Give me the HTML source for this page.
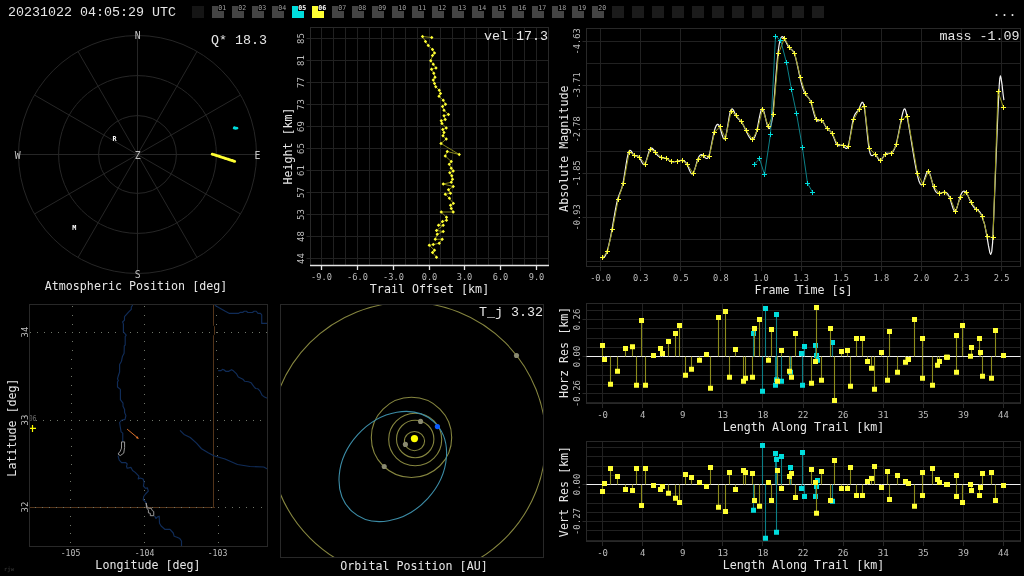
<!DOCTYPE html>
<html lang="en"><head><meta charset="utf-8"><title>Meteor event 20231022 04:05:29 UTC</title>
<style>
html,body{margin:0;padding:0;background:#000;overflow:hidden}
svg{display:block;will-change:transform}
text{white-space:pre}
</style></head>
<body>
<svg width="1024" height="576" viewBox="0 0 1024 576">
<text x="8" y="15.6" font-size="13.33" fill="#e6e6e6" text-anchor="start" font-family='"Liberation Mono", monospace' >20231022 04:05:29 UTC</text>
<text x="992.5" y="15.6" font-size="13.33" fill="#e6e6e6" text-anchor="start" font-family='"Liberation Mono", monospace' >...</text>
<rect x="192" y="6" width="12" height="12" fill="#151515"/>
<rect x="212" y="6" width="12" height="12" fill="#444444"/>
<rect x="218" y="4" width="8" height="7" fill="#000"/>
<text x="222.2" y="10" font-size="6.6" fill="#a0a0a0" text-anchor="middle" font-family='"DejaVu Sans Mono", "Liberation Mono", monospace' >01</text>
<rect x="232" y="6" width="12" height="12" fill="#444444"/>
<rect x="238" y="4" width="8" height="7" fill="#000"/>
<text x="242.2" y="10" font-size="6.6" fill="#a0a0a0" text-anchor="middle" font-family='"DejaVu Sans Mono", "Liberation Mono", monospace' >02</text>
<rect x="252" y="6" width="12" height="12" fill="#444444"/>
<rect x="258" y="4" width="8" height="7" fill="#000"/>
<text x="262.2" y="10" font-size="6.6" fill="#a0a0a0" text-anchor="middle" font-family='"DejaVu Sans Mono", "Liberation Mono", monospace' >03</text>
<rect x="272" y="6" width="12" height="12" fill="#444444"/>
<rect x="278" y="4" width="8" height="7" fill="#000"/>
<text x="282.2" y="10" font-size="6.6" fill="#a0a0a0" text-anchor="middle" font-family='"DejaVu Sans Mono", "Liberation Mono", monospace' >04</text>
<rect x="292" y="6" width="12" height="12" fill="#00dddd"/>
<rect x="298" y="4" width="8" height="7" fill="#000"/>
<text x="302.2" y="10" font-size="6.6" fill="#ffffff" text-anchor="middle" font-family='"DejaVu Sans Mono", "Liberation Mono", monospace' font-weight="bold">05</text>
<rect x="312" y="6" width="12" height="12" fill="#ffff33"/>
<rect x="318" y="4" width="8" height="7" fill="#000"/>
<text x="322.2" y="10" font-size="6.6" fill="#ffffff" text-anchor="middle" font-family='"DejaVu Sans Mono", "Liberation Mono", monospace' font-weight="bold">06</text>
<rect x="332" y="6" width="12" height="12" fill="#444444"/>
<rect x="338" y="4" width="8" height="7" fill="#000"/>
<text x="342.2" y="10" font-size="6.6" fill="#a0a0a0" text-anchor="middle" font-family='"DejaVu Sans Mono", "Liberation Mono", monospace' >07</text>
<rect x="352" y="6" width="12" height="12" fill="#444444"/>
<rect x="358" y="4" width="8" height="7" fill="#000"/>
<text x="362.2" y="10" font-size="6.6" fill="#a0a0a0" text-anchor="middle" font-family='"DejaVu Sans Mono", "Liberation Mono", monospace' >08</text>
<rect x="372" y="6" width="12" height="12" fill="#444444"/>
<rect x="378" y="4" width="8" height="7" fill="#000"/>
<text x="382.2" y="10" font-size="6.6" fill="#a0a0a0" text-anchor="middle" font-family='"DejaVu Sans Mono", "Liberation Mono", monospace' >09</text>
<rect x="392" y="6" width="12" height="12" fill="#444444"/>
<rect x="398" y="4" width="8" height="7" fill="#000"/>
<text x="402.2" y="10" font-size="6.6" fill="#a0a0a0" text-anchor="middle" font-family='"DejaVu Sans Mono", "Liberation Mono", monospace' >10</text>
<rect x="412" y="6" width="12" height="12" fill="#444444"/>
<rect x="418" y="4" width="8" height="7" fill="#000"/>
<text x="422.2" y="10" font-size="6.6" fill="#a0a0a0" text-anchor="middle" font-family='"DejaVu Sans Mono", "Liberation Mono", monospace' >11</text>
<rect x="432" y="6" width="12" height="12" fill="#444444"/>
<rect x="438" y="4" width="8" height="7" fill="#000"/>
<text x="442.2" y="10" font-size="6.6" fill="#a0a0a0" text-anchor="middle" font-family='"DejaVu Sans Mono", "Liberation Mono", monospace' >12</text>
<rect x="452" y="6" width="12" height="12" fill="#444444"/>
<rect x="458" y="4" width="8" height="7" fill="#000"/>
<text x="462.2" y="10" font-size="6.6" fill="#a0a0a0" text-anchor="middle" font-family='"DejaVu Sans Mono", "Liberation Mono", monospace' >13</text>
<rect x="472" y="6" width="12" height="12" fill="#444444"/>
<rect x="478" y="4" width="8" height="7" fill="#000"/>
<text x="482.2" y="10" font-size="6.6" fill="#a0a0a0" text-anchor="middle" font-family='"DejaVu Sans Mono", "Liberation Mono", monospace' >14</text>
<rect x="492" y="6" width="12" height="12" fill="#444444"/>
<rect x="498" y="4" width="8" height="7" fill="#000"/>
<text x="502.2" y="10" font-size="6.6" fill="#a0a0a0" text-anchor="middle" font-family='"DejaVu Sans Mono", "Liberation Mono", monospace' >15</text>
<rect x="512" y="6" width="12" height="12" fill="#444444"/>
<rect x="518" y="4" width="8" height="7" fill="#000"/>
<text x="522.2" y="10" font-size="6.6" fill="#a0a0a0" text-anchor="middle" font-family='"DejaVu Sans Mono", "Liberation Mono", monospace' >16</text>
<rect x="532" y="6" width="12" height="12" fill="#444444"/>
<rect x="538" y="4" width="8" height="7" fill="#000"/>
<text x="542.2" y="10" font-size="6.6" fill="#a0a0a0" text-anchor="middle" font-family='"DejaVu Sans Mono", "Liberation Mono", monospace' >17</text>
<rect x="552" y="6" width="12" height="12" fill="#444444"/>
<rect x="558" y="4" width="8" height="7" fill="#000"/>
<text x="562.2" y="10" font-size="6.6" fill="#a0a0a0" text-anchor="middle" font-family='"DejaVu Sans Mono", "Liberation Mono", monospace' >18</text>
<rect x="572" y="6" width="12" height="12" fill="#444444"/>
<rect x="578" y="4" width="8" height="7" fill="#000"/>
<text x="582.2" y="10" font-size="6.6" fill="#a0a0a0" text-anchor="middle" font-family='"DejaVu Sans Mono", "Liberation Mono", monospace' >19</text>
<rect x="592" y="6" width="12" height="12" fill="#444444"/>
<rect x="598" y="4" width="8" height="7" fill="#000"/>
<text x="602.2" y="10" font-size="6.6" fill="#a0a0a0" text-anchor="middle" font-family='"DejaVu Sans Mono", "Liberation Mono", monospace' >20</text>
<rect x="612" y="6" width="12" height="12" fill="#1b1b1b"/>
<rect x="632" y="6" width="12" height="12" fill="#1b1b1b"/>
<rect x="652" y="6" width="12" height="12" fill="#1b1b1b"/>
<rect x="672" y="6" width="12" height="12" fill="#1b1b1b"/>
<rect x="692" y="6" width="12" height="12" fill="#1b1b1b"/>
<rect x="712" y="6" width="12" height="12" fill="#1b1b1b"/>
<rect x="732" y="6" width="12" height="12" fill="#1b1b1b"/>
<rect x="752" y="6" width="12" height="12" fill="#1b1b1b"/>
<rect x="772" y="6" width="12" height="12" fill="#1b1b1b"/>
<rect x="792" y="6" width="12" height="12" fill="#1b1b1b"/>
<rect x="812" y="6" width="12" height="12" fill="#1b1b1b"/>
<circle cx="137.5" cy="154.5" r="38.9" fill="none" stroke="#262626" stroke-width="1"/>
<circle cx="137.5" cy="154.5" r="78.9" fill="none" stroke="#262626" stroke-width="1"/>
<circle cx="137.5" cy="154.5" r="119" fill="none" stroke="#262626" stroke-width="1"/>
<line x1="137.5" y1="154.5" x2="256.5" y2="154.5" stroke="#262626" stroke-width="1" />
<line x1="137.5" y1="154.5" x2="240.56" y2="214" stroke="#262626" stroke-width="1" />
<line x1="137.5" y1="154.5" x2="197" y2="257.56" stroke="#262626" stroke-width="1" />
<line x1="137.5" y1="154.5" x2="137.5" y2="273.5" stroke="#262626" stroke-width="1" />
<line x1="137.5" y1="154.5" x2="78" y2="257.56" stroke="#262626" stroke-width="1" />
<line x1="137.5" y1="154.5" x2="34.44" y2="214" stroke="#262626" stroke-width="1" />
<line x1="137.5" y1="154.5" x2="18.5" y2="154.5" stroke="#262626" stroke-width="1" />
<line x1="137.5" y1="154.5" x2="34.44" y2="95" stroke="#262626" stroke-width="1" />
<line x1="137.5" y1="154.5" x2="78" y2="51.44" stroke="#262626" stroke-width="1" />
<line x1="137.5" y1="154.5" x2="137.5" y2="35.5" stroke="#262626" stroke-width="1" />
<line x1="137.5" y1="154.5" x2="197" y2="51.44" stroke="#262626" stroke-width="1" />
<line x1="137.5" y1="154.5" x2="240.56" y2="95" stroke="#262626" stroke-width="1" />
<text x="137.75" y="39" font-size="9.8" fill="#c0c0c0" text-anchor="middle" font-family='"DejaVu Sans Mono", "Liberation Mono", monospace' >N</text>
<text x="137.75" y="278.3" font-size="9.8" fill="#c0c0c0" text-anchor="middle" font-family='"DejaVu Sans Mono", "Liberation Mono", monospace' >S</text>
<text x="17.75" y="159.1" font-size="9.8" fill="#c0c0c0" text-anchor="middle" font-family='"DejaVu Sans Mono", "Liberation Mono", monospace' >W</text>
<text x="257.4" y="159.1" font-size="9.8" fill="#c0c0c0" text-anchor="middle" font-family='"DejaVu Sans Mono", "Liberation Mono", monospace' >E</text>
<text x="137.75" y="159.1" font-size="9.8" fill="#c0c0c0" text-anchor="middle" font-family='"DejaVu Sans Mono", "Liberation Mono", monospace' >Z</text>
<circle cx="212.3" cy="154.2" r="1.45" fill="#ffff33"/>
<circle cx="213.61" cy="154.62" r="1.45" fill="#ffff33"/>
<circle cx="214.92" cy="155.05" r="1.45" fill="#ffff33"/>
<circle cx="216.24" cy="155.47" r="1.45" fill="#ffff33"/>
<circle cx="217.55" cy="155.89" r="1.45" fill="#ffff33"/>
<circle cx="218.86" cy="156.32" r="1.45" fill="#ffff33"/>
<circle cx="220.17" cy="156.74" r="1.45" fill="#ffff33"/>
<circle cx="221.48" cy="157.16" r="1.45" fill="#ffff33"/>
<circle cx="222.79" cy="157.59" r="1.45" fill="#ffff33"/>
<circle cx="224.11" cy="158.01" r="1.45" fill="#ffff33"/>
<circle cx="225.42" cy="158.44" r="1.45" fill="#ffff33"/>
<circle cx="226.73" cy="158.86" r="1.45" fill="#ffff33"/>
<circle cx="228.04" cy="159.28" r="1.45" fill="#ffff33"/>
<circle cx="229.35" cy="159.71" r="1.45" fill="#ffff33"/>
<circle cx="230.66" cy="160.13" r="1.45" fill="#ffff33"/>
<circle cx="231.98" cy="160.55" r="1.45" fill="#ffff33"/>
<circle cx="233.29" cy="160.98" r="1.45" fill="#ffff33"/>
<circle cx="234.6" cy="161.4" r="1.45" fill="#ffff33"/>
<ellipse cx="235.6" cy="128.2" rx="2.9" ry="1.45" fill="#00dddd"/>
<circle cx="234.4" cy="127.5" r="1.15" fill="#00dddd"/>
<text x="114.6" y="141" font-size="6.8" fill="#ffffff" text-anchor="middle" font-family='"DejaVu Sans Mono", "Liberation Mono", monospace' font-weight="bold">R</text>
<text x="74.3" y="230" font-size="6.8" fill="#ffffff" text-anchor="middle" font-family='"DejaVu Sans Mono", "Liberation Mono", monospace' font-weight="bold">M</text>
<text x="267" y="44.2" font-size="13.33" fill="#e6e6e6" text-anchor="end" font-family='"Liberation Mono", monospace' >Q* 18.3</text>
<text x="136" y="289.6" font-size="11.67" fill="#e6e6e6" text-anchor="middle" font-family='"DejaVu Sans Mono", "Liberation Mono", monospace' >Atmospheric Position [deg]</text>
<line x1="321.5" y1="27.5" x2="321.5" y2="265.5" stroke="#212121" stroke-width="1" />
<line x1="333.5" y1="27.5" x2="333.5" y2="265.5" stroke="#212121" stroke-width="1" />
<line x1="345.5" y1="27.5" x2="345.5" y2="265.5" stroke="#212121" stroke-width="1" />
<line x1="357.5" y1="27.5" x2="357.5" y2="265.5" stroke="#212121" stroke-width="1" />
<line x1="369.5" y1="27.5" x2="369.5" y2="265.5" stroke="#212121" stroke-width="1" />
<line x1="381.5" y1="27.5" x2="381.5" y2="265.5" stroke="#212121" stroke-width="1" />
<line x1="393.5" y1="27.5" x2="393.5" y2="265.5" stroke="#212121" stroke-width="1" />
<line x1="405.5" y1="27.5" x2="405.5" y2="265.5" stroke="#212121" stroke-width="1" />
<line x1="417.5" y1="27.5" x2="417.5" y2="265.5" stroke="#212121" stroke-width="1" />
<line x1="429.5" y1="27.5" x2="429.5" y2="265.5" stroke="#212121" stroke-width="1" />
<line x1="440.5" y1="27.5" x2="440.5" y2="265.5" stroke="#212121" stroke-width="1" />
<line x1="452.5" y1="27.5" x2="452.5" y2="265.5" stroke="#212121" stroke-width="1" />
<line x1="464.5" y1="27.5" x2="464.5" y2="265.5" stroke="#212121" stroke-width="1" />
<line x1="476.5" y1="27.5" x2="476.5" y2="265.5" stroke="#212121" stroke-width="1" />
<line x1="488.5" y1="27.5" x2="488.5" y2="265.5" stroke="#212121" stroke-width="1" />
<line x1="500.5" y1="27.5" x2="500.5" y2="265.5" stroke="#212121" stroke-width="1" />
<line x1="512.5" y1="27.5" x2="512.5" y2="265.5" stroke="#212121" stroke-width="1" />
<line x1="524.5" y1="27.5" x2="524.5" y2="265.5" stroke="#212121" stroke-width="1" />
<line x1="536.5" y1="27.5" x2="536.5" y2="265.5" stroke="#212121" stroke-width="1" />
<line x1="310.5" y1="38.5" x2="548.5" y2="38.5" stroke="#212121" stroke-width="1" />
<line x1="310.5" y1="60.5" x2="548.5" y2="60.5" stroke="#212121" stroke-width="1" />
<line x1="310.5" y1="82.5" x2="548.5" y2="82.5" stroke="#212121" stroke-width="1" />
<line x1="310.5" y1="104.5" x2="548.5" y2="104.5" stroke="#212121" stroke-width="1" />
<line x1="310.5" y1="126.5" x2="548.5" y2="126.5" stroke="#212121" stroke-width="1" />
<line x1="310.5" y1="148.5" x2="548.5" y2="148.5" stroke="#212121" stroke-width="1" />
<line x1="310.5" y1="170.5" x2="548.5" y2="170.5" stroke="#212121" stroke-width="1" />
<line x1="310.5" y1="192.5" x2="548.5" y2="192.5" stroke="#212121" stroke-width="1" />
<line x1="310.5" y1="214.5" x2="548.5" y2="214.5" stroke="#212121" stroke-width="1" />
<line x1="310.5" y1="236.5" x2="548.5" y2="236.5" stroke="#212121" stroke-width="1" />
<line x1="310.5" y1="258.5" x2="548.5" y2="258.5" stroke="#212121" stroke-width="1" />
<rect x="310.5" y="27.5" width="238" height="238" fill="none" stroke="#282828" stroke-width="1"/>
<line x1="321.5" y1="265.5" x2="321.5" y2="270" stroke="#e4e4e4" stroke-width="1.3" />
<text x="321.5" y="279.9" font-size="8.67" fill="#bcbcbc" text-anchor="middle" font-family='"DejaVu Sans Mono", "Liberation Mono", monospace' >-9.0</text>
<line x1="357.5" y1="265.5" x2="357.5" y2="270" stroke="#e4e4e4" stroke-width="1.3" />
<text x="357.5" y="279.9" font-size="8.67" fill="#bcbcbc" text-anchor="middle" font-family='"DejaVu Sans Mono", "Liberation Mono", monospace' >-6.0</text>
<line x1="393.5" y1="265.5" x2="393.5" y2="270" stroke="#e4e4e4" stroke-width="1.3" />
<text x="393.5" y="279.9" font-size="8.67" fill="#bcbcbc" text-anchor="middle" font-family='"DejaVu Sans Mono", "Liberation Mono", monospace' >-3.0</text>
<line x1="429.5" y1="265.5" x2="429.5" y2="270" stroke="#e4e4e4" stroke-width="1.3" />
<text x="429.5" y="279.9" font-size="8.67" fill="#bcbcbc" text-anchor="middle" font-family='"DejaVu Sans Mono", "Liberation Mono", monospace' >0.0</text>
<line x1="464.5" y1="265.5" x2="464.5" y2="270" stroke="#e4e4e4" stroke-width="1.3" />
<text x="464.5" y="279.9" font-size="8.67" fill="#bcbcbc" text-anchor="middle" font-family='"DejaVu Sans Mono", "Liberation Mono", monospace' >3.0</text>
<line x1="500.5" y1="265.5" x2="500.5" y2="270" stroke="#e4e4e4" stroke-width="1.3" />
<text x="500.5" y="279.9" font-size="8.67" fill="#bcbcbc" text-anchor="middle" font-family='"DejaVu Sans Mono", "Liberation Mono", monospace' >6.0</text>
<line x1="536.5" y1="265.5" x2="536.5" y2="270" stroke="#e4e4e4" stroke-width="1.3" />
<text x="536.5" y="279.9" font-size="8.67" fill="#bcbcbc" text-anchor="middle" font-family='"DejaVu Sans Mono", "Liberation Mono", monospace' >9.0</text>
<line x1="310" y1="265.5" x2="549" y2="265.5" stroke="#e4e4e4" stroke-width="1.4" />
<line x1="306.5" y1="38.5" x2="310.5" y2="38.5" stroke="#272727" stroke-width="1" />
<text x="303.7" y="38.5" font-size="9.0" fill="#bcbcbc" text-anchor="middle" font-family='"DejaVu Sans Mono", "Liberation Mono", monospace' transform="rotate(-90 303.7 38.5)" >85</text>
<line x1="306.5" y1="60.5" x2="310.5" y2="60.5" stroke="#272727" stroke-width="1" />
<text x="303.7" y="60.5" font-size="9.0" fill="#bcbcbc" text-anchor="middle" font-family='"DejaVu Sans Mono", "Liberation Mono", monospace' transform="rotate(-90 303.7 60.5)" >81</text>
<line x1="306.5" y1="82.5" x2="310.5" y2="82.5" stroke="#272727" stroke-width="1" />
<text x="303.7" y="82.5" font-size="9.0" fill="#bcbcbc" text-anchor="middle" font-family='"DejaVu Sans Mono", "Liberation Mono", monospace' transform="rotate(-90 303.7 82.5)" >77</text>
<line x1="306.5" y1="104.5" x2="310.5" y2="104.5" stroke="#272727" stroke-width="1" />
<text x="303.7" y="104.5" font-size="9.0" fill="#bcbcbc" text-anchor="middle" font-family='"DejaVu Sans Mono", "Liberation Mono", monospace' transform="rotate(-90 303.7 104.5)" >73</text>
<line x1="306.5" y1="126.5" x2="310.5" y2="126.5" stroke="#272727" stroke-width="1" />
<text x="303.7" y="126.5" font-size="9.0" fill="#bcbcbc" text-anchor="middle" font-family='"DejaVu Sans Mono", "Liberation Mono", monospace' transform="rotate(-90 303.7 126.5)" >69</text>
<line x1="306.5" y1="148.5" x2="310.5" y2="148.5" stroke="#272727" stroke-width="1" />
<text x="303.7" y="148.5" font-size="9.0" fill="#bcbcbc" text-anchor="middle" font-family='"DejaVu Sans Mono", "Liberation Mono", monospace' transform="rotate(-90 303.7 148.5)" >65</text>
<line x1="306.5" y1="170.5" x2="310.5" y2="170.5" stroke="#272727" stroke-width="1" />
<text x="303.7" y="170.5" font-size="9.0" fill="#bcbcbc" text-anchor="middle" font-family='"DejaVu Sans Mono", "Liberation Mono", monospace' transform="rotate(-90 303.7 170.5)" >61</text>
<line x1="306.5" y1="192.5" x2="310.5" y2="192.5" stroke="#272727" stroke-width="1" />
<text x="303.7" y="192.5" font-size="9.0" fill="#bcbcbc" text-anchor="middle" font-family='"DejaVu Sans Mono", "Liberation Mono", monospace' transform="rotate(-90 303.7 192.5)" >57</text>
<line x1="306.5" y1="214.5" x2="310.5" y2="214.5" stroke="#272727" stroke-width="1" />
<text x="303.7" y="214.5" font-size="9.0" fill="#bcbcbc" text-anchor="middle" font-family='"DejaVu Sans Mono", "Liberation Mono", monospace' transform="rotate(-90 303.7 214.5)" >53</text>
<line x1="306.5" y1="236.5" x2="310.5" y2="236.5" stroke="#272727" stroke-width="1" />
<text x="303.7" y="236.5" font-size="9.0" fill="#bcbcbc" text-anchor="middle" font-family='"DejaVu Sans Mono", "Liberation Mono", monospace' transform="rotate(-90 303.7 236.5)" >48</text>
<line x1="306.5" y1="258.5" x2="310.5" y2="258.5" stroke="#272727" stroke-width="1" />
<text x="303.7" y="258.5" font-size="9.0" fill="#bcbcbc" text-anchor="middle" font-family='"DejaVu Sans Mono", "Liberation Mono", monospace' transform="rotate(-90 303.7 258.5)" >44</text>
<text x="291.5" y="146" font-size="11.67" fill="#e6e6e6" text-anchor="middle" font-family='"DejaVu Sans Mono", "Liberation Mono", monospace' transform="rotate(-90 291.5 146)" >Height [km]</text>
<text x="429.5" y="293.1" font-size="11.67" fill="#e6e6e6" text-anchor="middle" font-family='"DejaVu Sans Mono", "Liberation Mono", monospace' >Trail Offset [km]</text>
<text x="548" y="40.3" font-size="13.33" fill="#e6e6e6" text-anchor="end" font-family='"Liberation Mono", monospace' >vel 17.3</text>
<polyline points="431.75,37.5 422.5,36.5 425.5,41.5 428.25,45.5 432.5,49.5 434.5,53 432.5,55.5 430.75,60.75 433.25,64.25 436,68 431.5,69.25 433.75,73.25 435,77.25 433.25,80 434.5,83.5 435.75,86.75 439.25,90.25 440.5,93.5 439,96.25 443.25,100.25 445.5,104.25 442.5,106.5 444,110.25 448.5,114.5 444,115.75 445.25,119.5 441.25,120.75 442,123.5 446.25,128 442.75,129.5 444,132.5 443,135.75 446.25,139 441,143.5 459.25,154.5 447.25,151.5 445.25,156 451.25,161.5 449.25,164.25 451.25,168.25 453.25,171 449.75,172.75 451.75,175.75 452.5,179.25 451.25,182.25 443.25,184 453.25,186.5 448.5,189.75 450.5,193.25 445.25,194.25 449.4,198.3 453.4,203.4 450.5,205.25 451.25,208.5 453.25,212 441.25,212 446.5,217.25 446.5,220.25 442.5,221.5 438.5,225.25 443.25,225.25 436.5,230.5 443.25,231.5 437.25,234.25 435.25,239.25 442.25,239.25 439.25,243.25 433.25,244.5 429.25,245.25 434.5,250.25 432.5,252.5 436.5,257.25" fill="none" stroke="#a3a321" stroke-width="0.8" stroke-linejoin="round" />
<path d="M430.05 37.5L431.75 35.8L433.45 37.5L431.75 39.2Z" fill="#ffff33"/>
<path d="M420.8 36.5L422.5 34.8L424.2 36.5L422.5 38.2Z" fill="#ffff33"/>
<path d="M423.8 41.5L425.5 39.8L427.2 41.5L425.5 43.2Z" fill="#ffff33"/>
<path d="M426.55 45.5L428.25 43.8L429.95 45.5L428.25 47.2Z" fill="#ffff33"/>
<path d="M430.8 49.5L432.5 47.8L434.2 49.5L432.5 51.2Z" fill="#ffff33"/>
<path d="M432.8 53L434.5 51.3L436.2 53L434.5 54.7Z" fill="#ffff33"/>
<path d="M430.8 55.5L432.5 53.8L434.2 55.5L432.5 57.2Z" fill="#ffff33"/>
<path d="M429.05 60.75L430.75 59.05L432.45 60.75L430.75 62.45Z" fill="#ffff33"/>
<path d="M431.55 64.25L433.25 62.55L434.95 64.25L433.25 65.95Z" fill="#ffff33"/>
<path d="M434.3 68L436 66.3L437.7 68L436 69.7Z" fill="#ffff33"/>
<path d="M429.8 69.25L431.5 67.55L433.2 69.25L431.5 70.95Z" fill="#ffff33"/>
<path d="M432.05 73.25L433.75 71.55L435.45 73.25L433.75 74.95Z" fill="#ffff33"/>
<path d="M433.3 77.25L435 75.55L436.7 77.25L435 78.95Z" fill="#ffff33"/>
<path d="M431.55 80L433.25 78.3L434.95 80L433.25 81.7Z" fill="#ffff33"/>
<path d="M432.8 83.5L434.5 81.8L436.2 83.5L434.5 85.2Z" fill="#ffff33"/>
<path d="M434.05 86.75L435.75 85.05L437.45 86.75L435.75 88.45Z" fill="#ffff33"/>
<path d="M437.55 90.25L439.25 88.55L440.95 90.25L439.25 91.95Z" fill="#ffff33"/>
<path d="M438.8 93.5L440.5 91.8L442.2 93.5L440.5 95.2Z" fill="#ffff33"/>
<path d="M437.3 96.25L439 94.55L440.7 96.25L439 97.95Z" fill="#ffff33"/>
<path d="M441.55 100.25L443.25 98.55L444.95 100.25L443.25 101.95Z" fill="#ffff33"/>
<path d="M443.8 104.25L445.5 102.55L447.2 104.25L445.5 105.95Z" fill="#ffff33"/>
<path d="M440.8 106.5L442.5 104.8L444.2 106.5L442.5 108.2Z" fill="#ffff33"/>
<path d="M442.3 110.25L444 108.55L445.7 110.25L444 111.95Z" fill="#ffff33"/>
<path d="M446.8 114.5L448.5 112.8L450.2 114.5L448.5 116.2Z" fill="#ffff33"/>
<path d="M442.3 115.75L444 114.05L445.7 115.75L444 117.45Z" fill="#ffff33"/>
<path d="M443.55 119.5L445.25 117.8L446.95 119.5L445.25 121.2Z" fill="#ffff33"/>
<path d="M439.55 120.75L441.25 119.05L442.95 120.75L441.25 122.45Z" fill="#ffff33"/>
<path d="M440.3 123.5L442 121.8L443.7 123.5L442 125.2Z" fill="#ffff33"/>
<path d="M444.55 128L446.25 126.3L447.95 128L446.25 129.7Z" fill="#ffff33"/>
<path d="M441.05 129.5L442.75 127.8L444.45 129.5L442.75 131.2Z" fill="#ffff33"/>
<path d="M442.3 132.5L444 130.8L445.7 132.5L444 134.2Z" fill="#ffff33"/>
<path d="M441.3 135.75L443 134.05L444.7 135.75L443 137.45Z" fill="#ffff33"/>
<path d="M444.55 139L446.25 137.3L447.95 139L446.25 140.7Z" fill="#ffff33"/>
<path d="M439.3 143.5L441 141.8L442.7 143.5L441 145.2Z" fill="#ffff33"/>
<path d="M457.55 154.5L459.25 152.8L460.95 154.5L459.25 156.2Z" fill="#ffff33"/>
<path d="M445.55 151.5L447.25 149.8L448.95 151.5L447.25 153.2Z" fill="#ffff33"/>
<path d="M443.55 156L445.25 154.3L446.95 156L445.25 157.7Z" fill="#ffff33"/>
<path d="M449.55 161.5L451.25 159.8L452.95 161.5L451.25 163.2Z" fill="#ffff33"/>
<path d="M447.55 164.25L449.25 162.55L450.95 164.25L449.25 165.95Z" fill="#ffff33"/>
<path d="M449.55 168.25L451.25 166.55L452.95 168.25L451.25 169.95Z" fill="#ffff33"/>
<path d="M451.55 171L453.25 169.3L454.95 171L453.25 172.7Z" fill="#ffff33"/>
<path d="M448.05 172.75L449.75 171.05L451.45 172.75L449.75 174.45Z" fill="#ffff33"/>
<path d="M450.05 175.75L451.75 174.05L453.45 175.75L451.75 177.45Z" fill="#ffff33"/>
<path d="M450.8 179.25L452.5 177.55L454.2 179.25L452.5 180.95Z" fill="#ffff33"/>
<path d="M449.55 182.25L451.25 180.55L452.95 182.25L451.25 183.95Z" fill="#ffff33"/>
<path d="M441.55 184L443.25 182.3L444.95 184L443.25 185.7Z" fill="#ffff33"/>
<path d="M451.55 186.5L453.25 184.8L454.95 186.5L453.25 188.2Z" fill="#ffff33"/>
<path d="M446.8 189.75L448.5 188.05L450.2 189.75L448.5 191.45Z" fill="#ffff33"/>
<path d="M448.8 193.25L450.5 191.55L452.2 193.25L450.5 194.95Z" fill="#ffff33"/>
<path d="M443.55 194.25L445.25 192.55L446.95 194.25L445.25 195.95Z" fill="#ffff33"/>
<path d="M447.7 198.3L449.4 196.6L451.1 198.3L449.4 200Z" fill="#ffff33"/>
<path d="M451.7 203.4L453.4 201.7L455.1 203.4L453.4 205.1Z" fill="#ffff33"/>
<path d="M448.8 205.25L450.5 203.55L452.2 205.25L450.5 206.95Z" fill="#ffff33"/>
<path d="M449.55 208.5L451.25 206.8L452.95 208.5L451.25 210.2Z" fill="#ffff33"/>
<path d="M451.55 212L453.25 210.3L454.95 212L453.25 213.7Z" fill="#ffff33"/>
<path d="M439.55 212L441.25 210.3L442.95 212L441.25 213.7Z" fill="#ffff33"/>
<path d="M444.8 217.25L446.5 215.55L448.2 217.25L446.5 218.95Z" fill="#ffff33"/>
<path d="M444.8 220.25L446.5 218.55L448.2 220.25L446.5 221.95Z" fill="#ffff33"/>
<path d="M440.8 221.5L442.5 219.8L444.2 221.5L442.5 223.2Z" fill="#ffff33"/>
<path d="M436.8 225.25L438.5 223.55L440.2 225.25L438.5 226.95Z" fill="#ffff33"/>
<path d="M441.55 225.25L443.25 223.55L444.95 225.25L443.25 226.95Z" fill="#ffff33"/>
<path d="M434.8 230.5L436.5 228.8L438.2 230.5L436.5 232.2Z" fill="#ffff33"/>
<path d="M441.55 231.5L443.25 229.8L444.95 231.5L443.25 233.2Z" fill="#ffff33"/>
<path d="M435.55 234.25L437.25 232.55L438.95 234.25L437.25 235.95Z" fill="#ffff33"/>
<path d="M433.55 239.25L435.25 237.55L436.95 239.25L435.25 240.95Z" fill="#ffff33"/>
<path d="M440.55 239.25L442.25 237.55L443.95 239.25L442.25 240.95Z" fill="#ffff33"/>
<path d="M437.55 243.25L439.25 241.55L440.95 243.25L439.25 244.95Z" fill="#ffff33"/>
<path d="M431.55 244.5L433.25 242.8L434.95 244.5L433.25 246.2Z" fill="#ffff33"/>
<path d="M427.55 245.25L429.25 243.55L430.95 245.25L429.25 246.95Z" fill="#ffff33"/>
<path d="M432.8 250.25L434.5 248.55L436.2 250.25L434.5 251.95Z" fill="#ffff33"/>
<path d="M430.8 252.5L432.5 250.8L434.2 252.5L432.5 254.2Z" fill="#ffff33"/>
<path d="M434.8 257.25L436.5 255.55L438.2 257.25L436.5 258.95Z" fill="#ffff33"/>
<line x1="600.5" y1="28.5" x2="600.5" y2="266.5" stroke="#212121" stroke-width="1" />
<line x1="640.5" y1="28.5" x2="640.5" y2="266.5" stroke="#212121" stroke-width="1" />
<line x1="680.5" y1="28.5" x2="680.5" y2="266.5" stroke="#212121" stroke-width="1" />
<line x1="720.5" y1="28.5" x2="720.5" y2="266.5" stroke="#212121" stroke-width="1" />
<line x1="761.5" y1="28.5" x2="761.5" y2="266.5" stroke="#212121" stroke-width="1" />
<line x1="801.5" y1="28.5" x2="801.5" y2="266.5" stroke="#212121" stroke-width="1" />
<line x1="841.5" y1="28.5" x2="841.5" y2="266.5" stroke="#212121" stroke-width="1" />
<line x1="881.5" y1="28.5" x2="881.5" y2="266.5" stroke="#212121" stroke-width="1" />
<line x1="921.5" y1="28.5" x2="921.5" y2="266.5" stroke="#212121" stroke-width="1" />
<line x1="961.5" y1="28.5" x2="961.5" y2="266.5" stroke="#212121" stroke-width="1" />
<line x1="1001.5" y1="28.5" x2="1001.5" y2="266.5" stroke="#212121" stroke-width="1" />
<line x1="586.5" y1="41.5" x2="1020.5" y2="41.5" stroke="#212121" stroke-width="1" />
<line x1="586.5" y1="63.5" x2="1020.5" y2="63.5" stroke="#212121" stroke-width="1" />
<line x1="586.5" y1="85.5" x2="1020.5" y2="85.5" stroke="#212121" stroke-width="1" />
<line x1="586.5" y1="107.5" x2="1020.5" y2="107.5" stroke="#212121" stroke-width="1" />
<line x1="586.5" y1="129.5" x2="1020.5" y2="129.5" stroke="#212121" stroke-width="1" />
<line x1="586.5" y1="151.5" x2="1020.5" y2="151.5" stroke="#212121" stroke-width="1" />
<line x1="586.5" y1="173.5" x2="1020.5" y2="173.5" stroke="#212121" stroke-width="1" />
<line x1="586.5" y1="195.5" x2="1020.5" y2="195.5" stroke="#212121" stroke-width="1" />
<line x1="586.5" y1="217.5" x2="1020.5" y2="217.5" stroke="#212121" stroke-width="1" />
<line x1="586.5" y1="239.5" x2="1020.5" y2="239.5" stroke="#212121" stroke-width="1" />
<line x1="586.5" y1="261.5" x2="1020.5" y2="261.5" stroke="#212121" stroke-width="1" />
<rect x="586.5" y="28.5" width="434" height="238" fill="none" stroke="#282828" stroke-width="1"/>
<line x1="600.5" y1="266.5" x2="600.5" y2="271" stroke="#272727" stroke-width="1" />
<text x="600.6" y="280.8" font-size="8.67" fill="#bcbcbc" text-anchor="middle" font-family='"DejaVu Sans Mono", "Liberation Mono", monospace' >-0.0</text>
<line x1="640.5" y1="266.5" x2="640.5" y2="271" stroke="#272727" stroke-width="1" />
<text x="640.7" y="280.8" font-size="8.67" fill="#bcbcbc" text-anchor="middle" font-family='"DejaVu Sans Mono", "Liberation Mono", monospace' >0.3</text>
<line x1="680.5" y1="266.5" x2="680.5" y2="271" stroke="#272727" stroke-width="1" />
<text x="680.8" y="280.8" font-size="8.67" fill="#bcbcbc" text-anchor="middle" font-family='"DejaVu Sans Mono", "Liberation Mono", monospace' >0.5</text>
<line x1="720.5" y1="266.5" x2="720.5" y2="271" stroke="#272727" stroke-width="1" />
<text x="720.9" y="280.8" font-size="8.67" fill="#bcbcbc" text-anchor="middle" font-family='"DejaVu Sans Mono", "Liberation Mono", monospace' >0.8</text>
<line x1="761.5" y1="266.5" x2="761.5" y2="271" stroke="#272727" stroke-width="1" />
<text x="761" y="280.8" font-size="8.67" fill="#bcbcbc" text-anchor="middle" font-family='"DejaVu Sans Mono", "Liberation Mono", monospace' >1.0</text>
<line x1="801.5" y1="266.5" x2="801.5" y2="271" stroke="#272727" stroke-width="1" />
<text x="801.1" y="280.8" font-size="8.67" fill="#bcbcbc" text-anchor="middle" font-family='"DejaVu Sans Mono", "Liberation Mono", monospace' >1.3</text>
<line x1="841.5" y1="266.5" x2="841.5" y2="271" stroke="#272727" stroke-width="1" />
<text x="841.2" y="280.8" font-size="8.67" fill="#bcbcbc" text-anchor="middle" font-family='"DejaVu Sans Mono", "Liberation Mono", monospace' >1.5</text>
<line x1="881.5" y1="266.5" x2="881.5" y2="271" stroke="#272727" stroke-width="1" />
<text x="881.3" y="280.8" font-size="8.67" fill="#bcbcbc" text-anchor="middle" font-family='"DejaVu Sans Mono", "Liberation Mono", monospace' >1.8</text>
<line x1="921.5" y1="266.5" x2="921.5" y2="271" stroke="#272727" stroke-width="1" />
<text x="921.4" y="280.8" font-size="8.67" fill="#bcbcbc" text-anchor="middle" font-family='"DejaVu Sans Mono", "Liberation Mono", monospace' >2.0</text>
<line x1="961.5" y1="266.5" x2="961.5" y2="271" stroke="#272727" stroke-width="1" />
<text x="961.5" y="280.8" font-size="8.67" fill="#bcbcbc" text-anchor="middle" font-family='"DejaVu Sans Mono", "Liberation Mono", monospace' >2.3</text>
<line x1="1001.5" y1="266.5" x2="1001.5" y2="271" stroke="#272727" stroke-width="1" />
<text x="1001.6" y="280.8" font-size="8.67" fill="#bcbcbc" text-anchor="middle" font-family='"DejaVu Sans Mono", "Liberation Mono", monospace' >2.5</text>
<line x1="582.5" y1="41.5" x2="586.5" y2="41.5" stroke="#272727" stroke-width="1" />
<text x="580" y="41.4" font-size="8.67" fill="#bcbcbc" text-anchor="middle" font-family='"DejaVu Sans Mono", "Liberation Mono", monospace' transform="rotate(-90 580 41.4)" >-4.63</text>
<line x1="582.5" y1="85.5" x2="586.5" y2="85.5" stroke="#272727" stroke-width="1" />
<text x="580" y="85.4" font-size="8.67" fill="#bcbcbc" text-anchor="middle" font-family='"DejaVu Sans Mono", "Liberation Mono", monospace' transform="rotate(-90 580 85.4)" >-3.71</text>
<line x1="582.5" y1="129.5" x2="586.5" y2="129.5" stroke="#272727" stroke-width="1" />
<text x="580" y="129.4" font-size="8.67" fill="#bcbcbc" text-anchor="middle" font-family='"DejaVu Sans Mono", "Liberation Mono", monospace' transform="rotate(-90 580 129.4)" >-2.78</text>
<line x1="582.5" y1="173.5" x2="586.5" y2="173.5" stroke="#272727" stroke-width="1" />
<text x="580" y="173.4" font-size="8.67" fill="#bcbcbc" text-anchor="middle" font-family='"DejaVu Sans Mono", "Liberation Mono", monospace' transform="rotate(-90 580 173.4)" >-1.85</text>
<line x1="582.5" y1="217.5" x2="586.5" y2="217.5" stroke="#272727" stroke-width="1" />
<text x="580" y="217.4" font-size="8.67" fill="#bcbcbc" text-anchor="middle" font-family='"DejaVu Sans Mono", "Liberation Mono", monospace' transform="rotate(-90 580 217.4)" >-0.93</text>
<text x="567.8" y="148.7" font-size="11.67" fill="#e6e6e6" text-anchor="middle" font-family='"DejaVu Sans Mono", "Liberation Mono", monospace' transform="rotate(-90 567.8 148.7)" >Absolute Magnitude</text>
<text x="803.5" y="294" font-size="11.67" fill="#e6e6e6" text-anchor="middle" font-family='"DejaVu Sans Mono", "Liberation Mono", monospace' >Frame Time [s]</text>
<text x="1019.6" y="40.3" font-size="13.33" fill="#e6e6e6" text-anchor="end" font-family='"Liberation Mono", monospace' >mass -1.09</text>
<polyline points="602.5,257.5 603,257.81 603.5,257.9 604,257.77 604.5,257.44 605,256.91 605.5,256.19 606,255.28 606.5,254.19 607,252.93 607.5,251.5 608,249.91 608.5,248.17 609,246.28 609.5,244.25 610,242.09 610.5,239.8 611,237.39 611.5,234.86 612,232.23 612.5,229.5 613,226.68 613.5,223.8 614,220.88 614.5,217.97 615,215.08 615.5,212.26 616,209.53 616.5,206.93 617,204.48 617.5,202.22 618,200.18 618.5,198.38 619,196.82 619.5,195.43 620,194.16 620.5,192.93 621,191.7 621.5,190.39 622,188.96 622.5,187.33 623,185.45 623.5,183.25 624,180.7 624.5,177.86 625,174.81 625.5,171.63 626,168.41 626.5,165.22 627,162.15 627.5,159.28 628,156.69 628.5,154.47 629,152.69 629.5,151.45 630,150.72 630.5,150.46 631,150.57 631.5,150.97 632,151.59 632.5,152.36 633,153.18 633.5,153.99 634,154.7 634.5,155.25 635,155.6 635.5,155.8 636,155.9 636.5,155.93 637,155.93 637.5,155.95 638,156.02 638.5,156.2 639,156.51 639.5,157 640,157.7 640.5,158.56 641,159.54 641.5,160.56 642,161.59 642.5,162.55 643,163.4 643.5,164.07 644,164.51 644.5,164.67 645,164.49 645.5,163.91 646,162.94 646.5,161.66 647,160.14 647.5,158.47 648,156.7 648.5,154.93 649,153.22 649.5,151.65 650,150.3 650.5,149.25 651,148.55 651.5,148.17 652,148.08 652.5,148.24 653,148.61 653.5,149.14 654,149.8 654.5,150.54 655,151.33 655.5,152.12 656,152.87 656.5,153.57 657,154.2 657.5,154.79 658,155.32 658.5,155.79 659,156.22 659.5,156.59 660,156.91 660.5,157.18 661,157.41 661.5,157.58 662,157.72 662.5,157.82 663,157.9 663.5,157.96 664,158.02 664.5,158.09 665,158.17 665.5,158.27 666,158.41 666.5,158.6 667,158.82 667.5,159.09 668,159.38 668.5,159.68 669,160 669.5,160.31 670,160.62 670.5,160.91 671,161.17 671.5,161.4 672,161.59 672.5,161.73 673,161.82 673.5,161.88 674,161.9 674.5,161.89 675,161.85 675.5,161.79 676,161.71 676.5,161.61 677,161.5 677.5,161.38 678,161.25 678.5,161.12 679,161 679.5,160.88 680,160.77 680.5,160.67 681,160.59 681.5,160.54 682,160.5 682.5,160.5 683,160.54 683.5,160.63 684,160.77 684.5,160.99 685,161.3 685.5,161.7 686,162.2 686.5,162.83 687,163.59 687.5,164.5 688,165.55 688.5,166.71 689,167.92 689.5,169.15 690,170.34 690.5,171.44 691,172.4 691.5,173.18 692,173.73 692.5,173.99 693,173.92 693.5,173.48 694,172.67 694.5,171.54 695,170.17 695.5,168.61 696,166.93 696.5,165.19 697,163.44 697.5,161.77 698,160.21 698.5,158.84 699,157.69 699.5,156.73 700,155.98 700.5,155.41 701,155.02 701.5,154.8 702,154.75 702.5,154.84 703,155.08 703.5,155.45 704,155.93 704.5,156.48 705,157.04 705.5,157.57 706,158.04 706.5,158.39 707,158.58 707.5,158.56 708,158.3 708.5,157.74 709,156.84 709.5,155.56 710,153.91 710.5,151.94 711,149.73 711.5,147.33 712,144.8 712.5,142.22 713,139.63 713.5,137.11 714,134.71 714.5,132.5 715,130.53 715.5,128.83 716,127.39 716.5,126.22 717,125.35 717.5,124.76 718,124.47 718.5,124.5 719,124.84 719.5,125.5 720,126.5 720.5,127.82 721,129.39 721.5,131.11 722,132.87 722.5,134.59 723,136.17 723.5,137.5 724,138.5 724.5,139.07 725,139.1 725.5,138.5 726,137.21 726.5,135.32 727,132.95 727.5,130.22 728,127.25 728.5,124.16 729,121.08 729.5,118.13 730,115.42 730.5,113.09 731,111.25 731.5,109.99 732,109.28 732.5,109.04 733,109.21 733.5,109.7 734,110.47 734.5,111.42 735,112.49 735.5,113.62 736,114.73 736.5,115.75 737,116.63 737.5,117.37 738,118 738.5,118.55 739,119.04 739.5,119.5 740,119.95 740.5,120.41 741,120.92 741.5,121.5 742,122.16 742.5,122.91 743,123.73 743.5,124.62 744,125.56 744.5,126.55 745,127.57 745.5,128.62 746,129.68 746.5,130.75 747,131.82 747.5,132.87 748,133.89 748.5,134.87 749,135.79 749.5,136.64 750,137.4 750.5,138.07 751,138.63 751.5,139.06 752,139.36 752.5,139.5 753,139.48 753.5,139.28 754,138.89 754.5,138.29 755,137.48 755.5,136.44 756,135.16 756.5,133.63 757,131.83 757.5,129.75 758,127.4 758.5,124.85 759,122.2 759.5,119.55 760,117 760.5,114.63 761,112.55 761.5,110.86 762,109.64 762.5,109 763,109 763.5,109.58 764,110.65 764.5,112.12 765,113.89 765.5,115.88 766,117.98 766.5,120.12 767,122.19 767.5,124.11 768,125.78 768.5,127.12 769,128.05 769.5,128.55 770,128.56 770.5,128.05 771,126.98 771.5,125.32 772,123.03 772.5,120.05 773,116.37 773.5,111.94 774,106.82 774.5,101.14 775,95.05 775.5,88.71 776,82.24 776.5,75.81 777,69.54 777.5,63.6 778,58.12 778.5,53.25 779,49.1 779.5,45.65 780,42.86 780.5,40.65 781,39 781.5,37.83 782,37.11 782.5,36.77 783,36.77 783.5,37.05 784,37.56 784.5,38.25 785,39.07 785.5,39.98 786,40.97 786.5,42 787,43.04 787.5,44.07 788,45.06 788.5,45.98 789,46.8 789.5,47.5 790,48.06 790.5,48.51 791,48.89 791.5,49.23 792,49.59 792.5,49.99 793,50.49 793.5,51.11 794,51.9 794.5,52.91 795,54.16 795.5,55.66 796,57.39 796.5,59.3 797,61.37 797.5,63.56 798,65.85 798.5,68.19 799,70.56 799.5,72.92 800,75.25 800.5,77.5 801,79.65 801.5,81.7 802,83.63 802.5,85.44 803,87.13 803.5,88.68 804,90.1 804.5,91.38 805,92.52 805.5,93.5 806,94.33 806.5,95.04 807,95.67 807.5,96.23 808,96.77 808.5,97.33 809,97.93 809.5,98.6 810,99.39 810.5,100.32 811,101.43 811.5,102.75 812,104.3 812.5,106.03 813,107.9 813.5,109.83 814,111.76 814.5,113.65 815,115.42 815.5,117.03 816,118.41 816.5,119.5 817,120.26 817.5,120.73 818,120.96 818.5,121 819,120.9 819.5,120.71 820,120.5 820.5,120.3 821,120.18 821.5,120.18 822,120.36 822.5,120.73 823,121.26 823.5,121.92 824,122.69 824.5,123.53 825,124.41 825.5,125.31 826,126.2 826.5,127.05 827,127.82 827.5,128.5 828,129.06 828.5,129.52 829,129.92 829.5,130.28 830,130.64 830.5,131.03 831,131.48 831.5,132.02 832,132.68 832.5,133.5 833,134.49 833.5,135.63 834,136.86 834.5,138.16 835,139.46 835.5,140.75 836,141.96 836.5,143.06 837,144 837.5,144.75 838,145.27 838.5,145.59 839,145.73 839.5,145.75 840,145.67 840.5,145.53 841,145.37 841.5,145.23 842,145.13 842.5,145.12 843,145.23 843.5,145.5 844,145.95 844.5,146.51 845,147.13 845.5,147.71 846,148.2 846.5,148.51 847,148.56 847.5,148.3 848,147.64 848.5,146.5 849,144.85 849.5,142.74 850,140.27 850.5,137.53 851,134.61 851.5,131.61 852,128.61 852.5,125.71 853,123 853.5,120.58 854,118.52 854.5,116.86 855,115.53 855.5,114.47 856,113.64 856.5,112.96 857,112.38 857.5,111.85 858,111.3 858.5,110.69 859,109.94 859.5,109 860,107.85 860.5,106.57 861,105.28 861.5,104.1 862,103.15 862.5,102.55 863,102.41 863.5,102.86 864,104.02 864.5,106 865,108.87 865.5,112.51 866,116.75 866.5,121.4 867,126.29 867.5,131.25 868,136.1 868.5,140.66 869,144.77 869.5,148.25 870,150.96 870.5,152.96 871,154.34 871.5,155.2 872,155.63 872.5,155.72 873,155.57 873.5,155.28 874,154.94 874.5,154.65 875,154.49 875.5,154.57 876,154.9 876.5,155.44 877,156.12 877.5,156.89 878,157.71 878.5,158.51 879,159.24 879.5,159.85 880,160.29 880.5,160.5 881,160.44 881.5,160.15 882,159.66 882.5,159.02 883,158.27 883.5,157.46 884,156.64 884.5,155.84 885,155.11 885.5,154.5 886,154.04 886.5,153.71 887,153.5 887.5,153.39 888,153.35 888.5,153.35 889,153.39 889.5,153.44 890,153.47 890.5,153.46 891,153.39 891.5,153.25 892,153.01 892.5,152.65 893,152.17 893.5,151.56 894,150.8 894.5,149.89 895,148.81 895.5,147.57 896,146.13 896.5,144.5 897,142.67 897.5,140.66 898,138.49 898.5,136.19 899,133.78 899.5,131.29 900,128.75 900.5,126.17 901,123.59 901.5,121.02 902,118.5 902.5,116.08 903,113.86 903.5,111.94 904,110.42 904.5,109.39 905,108.95 905.5,109.2 906,110.19 906.5,111.8 907,113.88 907.5,116.25 908,118.79 908.5,121.45 909,124.22 909.5,127.08 910,130.02 910.5,133.03 911,136.09 911.5,139.18 912,142.29 912.5,145.4 913,148.5 913.5,151.58 914,154.62 914.5,157.6 915,160.51 915.5,163.34 916,166.07 916.5,168.68 917,171.16 917.5,173.5 918,175.68 918.5,177.67 919,179.47 919.5,181.05 920,182.39 920.5,183.46 921,184.26 921.5,184.76 922,184.94 922.5,184.77 923,184.25 923.5,183.36 924,182.18 924.5,180.77 925,179.22 925.5,177.62 926,176.04 926.5,174.55 927,173.25 927.5,172.22 928,171.52 928.5,171.25 929,171.46 929.5,172.1 930,173.12 930.5,174.44 931,176 931.5,177.74 932,179.59 932.5,181.48 933,183.34 933.5,185.12 934,186.75 934.5,188.17 935,189.38 935.5,190.41 936,191.26 936.5,191.95 937,192.49 937.5,192.9 938,193.19 938.5,193.38 939,193.48 939.5,193.51 940,193.47 940.5,193.39 941,193.27 941.5,193.12 942,192.95 942.5,192.78 943,192.61 943.5,192.47 944,192.35 944.5,192.27 945,192.24 945.5,192.28 946,192.39 946.5,192.58 947,192.88 947.5,193.29 948,193.82 948.5,194.48 949,195.3 949.5,196.27 950,197.42 950.5,198.75 951,200.26 951.5,201.9 952,203.6 952.5,205.29 953,206.89 953.5,208.34 954,209.58 954.5,210.52 955,211.1 955.5,211.25 956,210.93 956.5,210.17 957,209.07 957.5,207.67 958,206.06 958.5,204.3 959,202.47 959.5,200.64 960,198.88 960.5,197.25 961,195.82 961.5,194.6 962,193.57 962.5,192.74 963,192.1 963.5,191.65 964,191.37 964.5,191.27 965,191.33 965.5,191.56 966,191.96 966.5,192.5 967,193.19 967.5,194.01 968,194.93 968.5,195.94 969,197.01 969.5,198.12 970,199.24 970.5,200.36 971,201.45 971.5,202.5 972,203.48 972.5,204.39 973,205.23 973.5,206 974,206.71 974.5,207.36 975,207.94 975.5,208.46 976,208.92 976.5,209.32 977,209.66 977.5,209.97 978,210.25 978.5,210.54 979,210.87 979.5,211.27 980,211.76 980.5,212.36 981,213.11 981.5,214.03 982,215.15 982.5,216.5 983,218.09 983.5,219.89 985,224 987,234 989,246 990.3,252.5 991.25,254.5 992.2,252 993.1,243 993.9,225 994.9,200 996.1,170 997.3,140 998.3,115 999,100 999.7,86 1000.3,78.5 1000.95,76 1001.6,78.5 1002.5,84.4 1003.5,93.75 1004.4,100.3" fill="none" stroke="#f4f4f4" stroke-width="1.2" stroke-linejoin="round" transform="translate(-0.5 -0.1)"/>
<polyline points="602.5,257.5 607.5,251.5 612.5,229.5 618.25,199.25 623.5,183.25 629.25,152 634.25,155 639.5,157 645.25,164.25 650.5,149.25 655.75,152.5 661.25,157.5 666.25,158.5 671.75,161.5 677,161.5 682.25,160.5 687.5,164.5 693.25,173.75 698.25,159.5 703.25,155.25 709.25,156.25 714.5,132.5 720,126.5 725.5,138.5 731,111.25 736.5,115.75 741.5,121.5 746.5,130.75 752.5,139.5 757.5,129.75 762.5,109 768.25,126.5 773.25,114.25 778.5,53.25 784.5,38.25 789.5,47.5 794.75,53.5 800.5,77.5 805.5,93.5 811.5,102.75 816.5,119.5 821.75,120.25 827.5,128.5 832.5,133.5 837.5,144.75 843.5,145.5 848.5,146.5 853.75,119.5 859.5,109 864.5,106 869.5,148.25 875.25,154.5 880.5,160.5 885.5,154.5 891.5,153.25 896.5,144.5 901.75,119.75 907.5,116.25 917.5,173.5 923,184.25 928.5,171.25 934,186.75 939.25,193.5 944.75,192.25 950.5,198.75 955.5,211.25 960.5,197.25 966.5,192.5 971.5,202.5 976.75,209.5 982.5,216.5 987.5,236.75 993,237.5 998,91.75 1003.5,107.5" fill="none" stroke="#96961a" stroke-width="1.0" stroke-linejoin="round" />
<polyline points="754.25,164.4 759.5,158.75 764.5,174.5 770.5,134.1 775.5,36 780.75,40.75 786.5,62.75 791.5,89.75 796.5,113.5 802.4,147.5 807.5,183.25 812.75,192.5" fill="none" stroke="#0c8088" stroke-width="1.0" stroke-linejoin="round" />
<path d="M752 164.5H757M754.5 162V167" stroke="#00dddd" stroke-width="1.0" fill="none"/>
<path d="M757 158.5H762M759.5 156V161" stroke="#00dddd" stroke-width="1.0" fill="none"/>
<path d="M762 174.5H767M764.5 172V177" stroke="#00dddd" stroke-width="1.0" fill="none"/>
<path d="M768 134.5H773M770.5 132V137" stroke="#00dddd" stroke-width="1.0" fill="none"/>
<path d="M773 36.5H778M775.5 34V39" stroke="#00dddd" stroke-width="1.0" fill="none"/>
<path d="M778 40.5H783M780.5 38V43" stroke="#00dddd" stroke-width="1.0" fill="none"/>
<path d="M784 62.5H789M786.5 60V65" stroke="#00dddd" stroke-width="1.0" fill="none"/>
<path d="M789 89.5H794M791.5 87V92" stroke="#00dddd" stroke-width="1.0" fill="none"/>
<path d="M794 113.5H799M796.5 111V116" stroke="#00dddd" stroke-width="1.0" fill="none"/>
<path d="M800 147.5H805M802.5 145V150" stroke="#00dddd" stroke-width="1.0" fill="none"/>
<path d="M805 183.5H810M807.5 181V186" stroke="#00dddd" stroke-width="1.0" fill="none"/>
<path d="M810 192.5H815M812.5 190V195" stroke="#00dddd" stroke-width="1.0" fill="none"/>
<path d="M600 257.5H605M602.5 255V260" stroke="#ffff33" stroke-width="1.0" fill="none"/>
<path d="M605 251.5H610M607.5 249V254" stroke="#ffff33" stroke-width="1.0" fill="none"/>
<path d="M610 229.5H615M612.5 227V232" stroke="#ffff33" stroke-width="1.0" fill="none"/>
<path d="M616 199.5H621M618.5 197V202" stroke="#ffff33" stroke-width="1.0" fill="none"/>
<path d="M621 183.5H626M623.5 181V186" stroke="#ffff33" stroke-width="1.0" fill="none"/>
<path d="M627 152.5H632M629.5 150V155" stroke="#ffff33" stroke-width="1.0" fill="none"/>
<path d="M632 155.5H637M634.5 153V158" stroke="#ffff33" stroke-width="1.0" fill="none"/>
<path d="M637 157.5H642M639.5 155V160" stroke="#ffff33" stroke-width="1.0" fill="none"/>
<path d="M643 164.5H648M645.5 162V167" stroke="#ffff33" stroke-width="1.0" fill="none"/>
<path d="M648 149.5H653M650.5 147V152" stroke="#ffff33" stroke-width="1.0" fill="none"/>
<path d="M653 152.5H658M655.5 150V155" stroke="#ffff33" stroke-width="1.0" fill="none"/>
<path d="M659 157.5H664M661.5 155V160" stroke="#ffff33" stroke-width="1.0" fill="none"/>
<path d="M664 158.5H669M666.5 156V161" stroke="#ffff33" stroke-width="1.0" fill="none"/>
<path d="M669 161.5H674M671.5 159V164" stroke="#ffff33" stroke-width="1.0" fill="none"/>
<path d="M675 161.5H680M677.5 159V164" stroke="#ffff33" stroke-width="1.0" fill="none"/>
<path d="M680 160.5H685M682.5 158V163" stroke="#ffff33" stroke-width="1.0" fill="none"/>
<path d="M685 164.5H690M687.5 162V167" stroke="#ffff33" stroke-width="1.0" fill="none"/>
<path d="M691 173.5H696M693.5 171V176" stroke="#ffff33" stroke-width="1.0" fill="none"/>
<path d="M696 159.5H701M698.5 157V162" stroke="#ffff33" stroke-width="1.0" fill="none"/>
<path d="M701 155.5H706M703.5 153V158" stroke="#ffff33" stroke-width="1.0" fill="none"/>
<path d="M707 156.5H712M709.5 154V159" stroke="#ffff33" stroke-width="1.0" fill="none"/>
<path d="M712 132.5H717M714.5 130V135" stroke="#ffff33" stroke-width="1.0" fill="none"/>
<path d="M718 126.5H723M720.5 124V129" stroke="#ffff33" stroke-width="1.0" fill="none"/>
<path d="M723 138.5H728M725.5 136V141" stroke="#ffff33" stroke-width="1.0" fill="none"/>
<path d="M729 111.5H734M731.5 109V114" stroke="#ffff33" stroke-width="1.0" fill="none"/>
<path d="M734 115.5H739M736.5 113V118" stroke="#ffff33" stroke-width="1.0" fill="none"/>
<path d="M739 121.5H744M741.5 119V124" stroke="#ffff33" stroke-width="1.0" fill="none"/>
<path d="M744 130.5H749M746.5 128V133" stroke="#ffff33" stroke-width="1.0" fill="none"/>
<path d="M750 139.5H755M752.5 137V142" stroke="#ffff33" stroke-width="1.0" fill="none"/>
<path d="M755 129.5H760M757.5 127V132" stroke="#ffff33" stroke-width="1.0" fill="none"/>
<path d="M760 109.5H765M762.5 107V112" stroke="#ffff33" stroke-width="1.0" fill="none"/>
<path d="M766 126.5H771M768.5 124V129" stroke="#ffff33" stroke-width="1.0" fill="none"/>
<path d="M771 114.5H776M773.5 112V117" stroke="#ffff33" stroke-width="1.0" fill="none"/>
<path d="M776 53.5H781M778.5 51V56" stroke="#ffff33" stroke-width="1.0" fill="none"/>
<path d="M782 38.5H787M784.5 36V41" stroke="#ffff33" stroke-width="1.0" fill="none"/>
<path d="M787 47.5H792M789.5 45V50" stroke="#ffff33" stroke-width="1.0" fill="none"/>
<path d="M792 53.5H797M794.5 51V56" stroke="#ffff33" stroke-width="1.0" fill="none"/>
<path d="M798 77.5H803M800.5 75V80" stroke="#ffff33" stroke-width="1.0" fill="none"/>
<path d="M803 93.5H808M805.5 91V96" stroke="#ffff33" stroke-width="1.0" fill="none"/>
<path d="M809 102.5H814M811.5 100V105" stroke="#ffff33" stroke-width="1.0" fill="none"/>
<path d="M814 119.5H819M816.5 117V122" stroke="#ffff33" stroke-width="1.0" fill="none"/>
<path d="M819 120.5H824M821.5 118V123" stroke="#ffff33" stroke-width="1.0" fill="none"/>
<path d="M825 128.5H830M827.5 126V131" stroke="#ffff33" stroke-width="1.0" fill="none"/>
<path d="M830 133.5H835M832.5 131V136" stroke="#ffff33" stroke-width="1.0" fill="none"/>
<path d="M835 144.5H840M837.5 142V147" stroke="#ffff33" stroke-width="1.0" fill="none"/>
<path d="M841 145.5H846M843.5 143V148" stroke="#ffff33" stroke-width="1.0" fill="none"/>
<path d="M846 146.5H851M848.5 144V149" stroke="#ffff33" stroke-width="1.0" fill="none"/>
<path d="M851 119.5H856M853.5 117V122" stroke="#ffff33" stroke-width="1.0" fill="none"/>
<path d="M857 109.5H862M859.5 107V112" stroke="#ffff33" stroke-width="1.0" fill="none"/>
<path d="M862 106.5H867M864.5 104V109" stroke="#ffff33" stroke-width="1.0" fill="none"/>
<path d="M867 148.5H872M869.5 146V151" stroke="#ffff33" stroke-width="1.0" fill="none"/>
<path d="M873 154.5H878M875.5 152V157" stroke="#ffff33" stroke-width="1.0" fill="none"/>
<path d="M878 160.5H883M880.5 158V163" stroke="#ffff33" stroke-width="1.0" fill="none"/>
<path d="M883 154.5H888M885.5 152V157" stroke="#ffff33" stroke-width="1.0" fill="none"/>
<path d="M889 153.5H894M891.5 151V156" stroke="#ffff33" stroke-width="1.0" fill="none"/>
<path d="M894 144.5H899M896.5 142V147" stroke="#ffff33" stroke-width="1.0" fill="none"/>
<path d="M899 119.5H904M901.5 117V122" stroke="#ffff33" stroke-width="1.0" fill="none"/>
<path d="M905 116.5H910M907.5 114V119" stroke="#ffff33" stroke-width="1.0" fill="none"/>
<path d="M915 173.5H920M917.5 171V176" stroke="#ffff33" stroke-width="1.0" fill="none"/>
<path d="M921 184.5H926M923.5 182V187" stroke="#ffff33" stroke-width="1.0" fill="none"/>
<path d="M926 171.5H931M928.5 169V174" stroke="#ffff33" stroke-width="1.0" fill="none"/>
<path d="M932 186.5H937M934.5 184V189" stroke="#ffff33" stroke-width="1.0" fill="none"/>
<path d="M937 193.5H942M939.5 191V196" stroke="#ffff33" stroke-width="1.0" fill="none"/>
<path d="M942 192.5H947M944.5 190V195" stroke="#ffff33" stroke-width="1.0" fill="none"/>
<path d="M948 198.5H953M950.5 196V201" stroke="#ffff33" stroke-width="1.0" fill="none"/>
<path d="M953 211.5H958M955.5 209V214" stroke="#ffff33" stroke-width="1.0" fill="none"/>
<path d="M958 197.5H963M960.5 195V200" stroke="#ffff33" stroke-width="1.0" fill="none"/>
<path d="M964 192.5H969M966.5 190V195" stroke="#ffff33" stroke-width="1.0" fill="none"/>
<path d="M969 202.5H974M971.5 200V205" stroke="#ffff33" stroke-width="1.0" fill="none"/>
<path d="M974 209.5H979M976.5 207V212" stroke="#ffff33" stroke-width="1.0" fill="none"/>
<path d="M980 216.5H985M982.5 214V219" stroke="#ffff33" stroke-width="1.0" fill="none"/>
<path d="M985 236.5H990M987.5 234V239" stroke="#ffff33" stroke-width="1.0" fill="none"/>
<path d="M991 237.5H996M993.5 235V240" stroke="#ffff33" stroke-width="1.0" fill="none"/>
<path d="M996 91.5H1001M998.5 89V94" stroke="#ffff33" stroke-width="1.0" fill="none"/>
<path d="M1001 107.5H1006M1003.5 105V110" stroke="#ffff33" stroke-width="1.0" fill="none"/>
<clipPath id="mapclip"><rect x="29.5" y="304.5" width="238.0" height="242.0"/></clipPath>
<g clip-path="url(#mapclip)">
<polyline points="213.5,304.5 213.5,325.5 214.5,326.5 214.5,334.5 213.5,335.5 213.5,507.5 29.5,507.5" fill="none" stroke="#52341a" stroke-width="1.0" stroke-linejoin="round" />
<line x1="213.5" y1="507.5" x2="215" y2="507.5" stroke="#52341a" stroke-width="1.0" />
<path d="M30 332h1v1h-1zM35 507h1v1h-1zM36 420h1v1h-1zM37 332h1v1h-1zM42 507h1v1h-1zM43 420h1v1h-1zM44 332h1v1h-1zM49 507h1v1h-1zM50 420h1v1h-1zM51 332h1v1h-1zM56 507h1v1h-1zM57 420h1v1h-1zM58 332h1v1h-1zM63 507h1v1h-1zM64 420h1v1h-1zM65 332h1v1h-1zM70 473h1v1h-1zM70 481h1v1h-1zM70 490h1v1h-1zM70 499h1v1h-1zM70 507h1v1h-1zM70 516h1v1h-1zM70 525h1v1h-1zM70 533h1v1h-1zM70 542h1v1h-1zM71 359h1v1h-1zM71 368h1v1h-1zM71 376h1v1h-1zM71 385h1v1h-1zM71 394h1v1h-1zM71 403h1v1h-1zM71 412h1v1h-1zM71 420h1v1h-1zM71 429h1v1h-1zM71 438h1v1h-1zM71 446h1v1h-1zM71 455h1v1h-1zM71 464h1v1h-1zM72 306h1v1h-1zM72 315h1v1h-1zM72 324h1v1h-1zM72 332h1v1h-1zM72 341h1v1h-1zM72 350h1v1h-1zM78 507h1v1h-1zM79 332h1v1h-1zM79 420h1v1h-1zM85 507h1v1h-1zM86 332h1v1h-1zM86 420h1v1h-1zM93 420h1v1h-1zM93 507h1v1h-1zM94 332h1v1h-1zM100 420h1v1h-1zM100 507h1v1h-1zM101 332h1v1h-1zM107 507h1v1h-1zM108 332h1v1h-1zM108 420h1v1h-1zM115 332h1v1h-1zM115 420h1v1h-1zM115 507h1v1h-1zM122 420h1v1h-1zM122 507h1v1h-1zM123 332h1v1h-1zM130 332h1v1h-1zM130 420h1v1h-1zM130 507h1v1h-1zM137 332h1v1h-1zM137 420h1v1h-1zM137 507h1v1h-1zM144 306h1v1h-1zM144 315h1v1h-1zM144 324h1v1h-1zM144 332h1v1h-1zM144 341h1v1h-1zM144 350h1v1h-1zM144 359h1v1h-1zM144 368h1v1h-1zM144 376h1v1h-1zM144 385h1v1h-1zM144 394h1v1h-1zM144 403h1v1h-1zM144 412h1v1h-1zM144 420h1v1h-1zM144 429h1v1h-1zM144 438h1v1h-1zM144 446h1v1h-1zM144 455h1v1h-1zM144 464h1v1h-1zM144 473h1v1h-1zM144 481h1v1h-1zM144 490h1v1h-1zM144 499h1v1h-1zM144 507h1v1h-1zM144 516h1v1h-1zM144 525h1v1h-1zM144 533h1v1h-1zM144 542h1v1h-1zM152 332h1v1h-1zM152 420h1v1h-1zM152 507h1v1h-1zM159 332h1v1h-1zM159 420h1v1h-1zM159 507h1v1h-1zM166 332h1v1h-1zM166 420h1v1h-1zM166 507h1v1h-1zM173 332h1v1h-1zM174 420h1v1h-1zM174 507h1v1h-1zM180 332h1v1h-1zM181 420h1v1h-1zM181 507h1v1h-1zM188 332h1v1h-1zM188 420h1v1h-1zM189 507h1v1h-1zM195 332h1v1h-1zM195 420h1v1h-1zM196 507h1v1h-1zM202 332h1v1h-1zM203 420h1v1h-1zM203 507h1v1h-1zM209 332h1v1h-1zM210 420h1v1h-1zM211 507h1v1h-1zM216 306h1v1h-1zM216 315h1v1h-1zM216 324h1v1h-1zM216 332h1v1h-1zM216 341h1v1h-1zM216 350h1v1h-1zM217 332h1v1h-1zM217 359h1v1h-1zM217 368h1v1h-1zM217 376h1v1h-1zM217 385h1v1h-1zM217 394h1v1h-1zM217 403h1v1h-1zM217 412h1v1h-1zM217 420h1v1h-1zM217 429h1v1h-1zM217 438h1v1h-1zM217 446h1v1h-1zM217 455h1v1h-1zM217 464h1v1h-1zM218 473h1v1h-1zM218 481h1v1h-1zM218 490h1v1h-1zM218 499h1v1h-1zM218 507h1v1h-1zM218 516h1v1h-1zM218 525h1v1h-1zM218 533h1v1h-1zM218 542h1v1h-1zM224 332h1v1h-1zM224 420h1v1h-1zM225 507h1v1h-1zM231 332h1v1h-1zM231 420h1v1h-1zM232 507h1v1h-1zM238 332h1v1h-1zM239 420h1v1h-1zM239 507h1v1h-1zM245 332h1v1h-1zM246 420h1v1h-1zM246 507h1v1h-1zM252 332h1v1h-1zM253 420h1v1h-1zM253 507h1v1h-1zM259 332h1v1h-1zM260 420h1v1h-1zM261 507h1v1h-1zM266 332h1v1h-1z" fill="#70766a"/>
<polyline points="132.7,305.2 131.3,307 131.3,309.4 129,311.7 124.5,316.7 124.5,320.2 122.6,322 123.4,323.9 123.4,331.9 126.2,335.1 125.2,336.6 125.2,345 124.3,345.9 124.1,353.3 122.4,356.6 121.5,361.2 119.6,364.5 119.6,372 118.2,376.2 117.5,379 118.4,380.5 117.5,381.9 117.5,387 120.4,389.4 120.4,399.7 123,403.1 123,406.25 124.6,409.4 124.6,412.5 125.9,415.6 125,419.4 121.5,420.25 119.6,422.5 120.25,426.9 121.1,431.9 122.75,433.1 122.75,441.5" fill="none" stroke="#102c58" stroke-width="1.15" stroke-linejoin="round" />
<polyline points="118.2,455.5 118.3,456.9 119.25,460.2 121.6,462.6 125.8,462.6 127.2,464 126.5,466.3 127.2,468.2 131,467.4 132.6,470.5 135.2,472.4 138.9,476.2 138.2,479 140.3,478 143.1,479 144.1,482.2 143.4,486 145.5,488.3 147.4,487.9 148.3,491.1 145.5,494 143.7,496.5 143.25,499.75 145.6,502.1 146.2,503" fill="none" stroke="#102c58" stroke-width="1.15" stroke-linejoin="round" />
<polyline points="154.5,516 155.25,517.1 155.9,518.5 157.3,517.1 159.2,516.2 159.5,523.2 161.1,526 164.8,529.3 170,529.3 173.25,533 174.2,536.3 177,537.25 179.8,538.6 181.5,541 181.5,546" fill="none" stroke="#102c58" stroke-width="1.15" stroke-linejoin="round" />
<polyline points="214.8,305.3 220.4,308.4 225.3,311.25 229.5,313.4 238.3,313.4 240.4,312.3 242.9,312.3 244.3,311.25 246.4,311.25 247.8,312.5 252.4,312.5 254.1,311.25 256.25,311.25 258,313.4 260.5,313.4 261.7,314.8 261.7,323.4 267.5,323.4" fill="none" stroke="#102c58" stroke-width="1.15" stroke-linejoin="round" />
<polyline points="218.1,370.6 221.1,370.6 222.5,369.4 223.9,369.7 225.7,371.3 228.8,371.3 231.5,369.7 233.4,370.8 236.6,373.9 238.3,377.1 242.9,379.2 244.7,381.3 248.5,381.7 251,382.7 254.1,386.9 255.6,388.5 257.7,388.7 260.1,391.2 262.2,395.4 264.5,397 267.4,398.3" fill="none" stroke="#102c58" stroke-width="1.15" stroke-linejoin="round" />
<polyline points="180,430.4 184,434.4 190.25,437.5 196.5,443.1 201.5,448.75 207.75,452.5 213.75,455.75 225,459 237.5,464.5 250,466.5 263.75,467 267.4,469" fill="none" stroke="#102c58" stroke-width="1.15" stroke-linejoin="round" />
<polygon points="121.5,441.9 124.6,441.9 124.6,447.5 123.75,453.1 120.25,455.6 118,454 120.25,451.25 121.5,448.1" fill="none" stroke="#a8a8a8" stroke-width="0.9"/>
<polygon points="146.1,503 147,506.3 148.4,508.2 151.2,508.2 152.2,510.5 153.75,511.5 153.75,515.7 150.3,515.7 150.3,513.3 148.4,512.9 148.4,510.1 146.5,507.7" fill="none" stroke="#a8a8a8" stroke-width="0.9"/>
<line x1="127.1" y1="429.1" x2="137.6" y2="437.8" stroke="#f07c30" stroke-width="0.9" />
<path d="M138.9 438.9L135.9 438.0L137.4 436.2Z" fill="#f07c30"/>
<text transform="translate(36.4 421.1) scale(0.74 1)" font-size="8.2" fill="#747474" text-anchor="end" font-family='"DejaVu Sans Mono", monospace'>06</text>
<path d="M29 428.4H36M32.5 424.9V431.9" stroke="#ffff00" stroke-width="1.2" fill="none"/>
</g>
<rect x="29.5" y="304.5" width="238.0" height="242.0" fill="none" stroke="#282828" stroke-width="1"/>
<text x="70.5" y="555.8" font-size="8.2" fill="#bcbcbc" text-anchor="middle" font-family='"DejaVu Sans Mono", "Liberation Mono", monospace' >-105</text>
<text x="144.5" y="555.8" font-size="8.2" fill="#bcbcbc" text-anchor="middle" font-family='"DejaVu Sans Mono", "Liberation Mono", monospace' >-104</text>
<text x="217.5" y="555.8" font-size="8.2" fill="#bcbcbc" text-anchor="middle" font-family='"DejaVu Sans Mono", "Liberation Mono", monospace' >-103</text>
<text x="28" y="332" font-size="9.0" fill="#bcbcbc" text-anchor="middle" font-family='"DejaVu Sans Mono", "Liberation Mono", monospace' transform="rotate(-90 28 332)" >34</text>
<text x="28" y="420" font-size="9.0" fill="#bcbcbc" text-anchor="middle" font-family='"DejaVu Sans Mono", "Liberation Mono", monospace' transform="rotate(-90 28 420)" >33</text>
<text x="28" y="507" font-size="9.0" fill="#bcbcbc" text-anchor="middle" font-family='"DejaVu Sans Mono", "Liberation Mono", monospace' transform="rotate(-90 28 507)" >32</text>
<text x="16" y="427.5" font-size="11.67" fill="#e6e6e6" text-anchor="middle" font-family='"DejaVu Sans Mono", "Liberation Mono", monospace' transform="rotate(-90 16 427.5)" >Latitude [deg]</text>
<text x="148" y="569.2" font-size="11.67" fill="#e6e6e6" text-anchor="middle" font-family='"DejaVu Sans Mono", "Liberation Mono", monospace' >Longitude [deg]</text>
<text x="4" y="571.3" font-size="5.6" fill="#2c2c2c" text-anchor="start" font-family='"DejaVu Sans Mono", "Liberation Mono", monospace' font-weight="bold">rjw</text>
<clipPath id="orbclip"><rect x="280.5" y="304.5" width="263.0" height="253.0"/></clipPath>
<g clip-path="url(#orbclip)">
<ellipse cx="407.65" cy="440.4" rx="138.15" ry="138.15" fill="none" stroke="#85853f" stroke-width="1.1" />
<ellipse cx="411.5" cy="437.4" rx="40.2" ry="40.1" fill="none" stroke="#85853f" stroke-width="1.1" />
<ellipse cx="415.2" cy="439.5" rx="26.5" ry="26.3" fill="none" stroke="#85853f" stroke-width="1.1" />
<ellipse cx="415.2" cy="439.0" rx="18.7" ry="18.75" fill="none" stroke="#85853f" stroke-width="1.1" />
<ellipse cx="414.5" cy="441.1" rx="10.1" ry="9.6" fill="none" stroke="#85853f" stroke-width="1.1" />
<ellipse cx="392.8" cy="466.5" rx="60.65" ry="47.36" fill="none" stroke="#3c8ca6" stroke-width="1.1" transform="rotate(-47.75 392.8 466.5)"/>
<circle cx="405.4" cy="444.4" r="2.55" fill="#8a8a70"/>
<circle cx="420.55" cy="421.4" r="2.55" fill="#8a8a70"/>
<circle cx="384.2" cy="466.5" r="2.55" fill="#8a8a70"/>
<circle cx="516.5" cy="355.5" r="2.55" fill="#8a8a70"/>
<circle cx="437.4" cy="426.55" r="2.6" fill="#0a5cff"/>
<circle cx="414.45" cy="438.55" r="3.6" fill="#ffff00"/>
</g>
<rect x="280.5" y="304.5" width="263.0" height="253.0" fill="none" stroke="#282828" stroke-width="1"/>
<text x="543" y="316.3" font-size="13.33" fill="#e6e6e6" text-anchor="end" font-family='"Liberation Mono", monospace' >T_j 3.32</text>
<text x="414" y="569.6" font-size="11.67" fill="#e6e6e6" text-anchor="middle" font-family='"DejaVu Sans Mono", "Liberation Mono", monospace' >Orbital Position [AU]</text>
<line x1="602.5" y1="303.5" x2="602.5" y2="403.5" stroke="#212121" stroke-width="1" />
<line x1="642.5" y1="303.5" x2="642.5" y2="403.5" stroke="#212121" stroke-width="1" />
<line x1="682.5" y1="303.5" x2="682.5" y2="403.5" stroke="#212121" stroke-width="1" />
<line x1="722.5" y1="303.5" x2="722.5" y2="403.5" stroke="#212121" stroke-width="1" />
<line x1="762.5" y1="303.5" x2="762.5" y2="403.5" stroke="#212121" stroke-width="1" />
<line x1="803.5" y1="303.5" x2="803.5" y2="403.5" stroke="#212121" stroke-width="1" />
<line x1="843.5" y1="303.5" x2="843.5" y2="403.5" stroke="#212121" stroke-width="1" />
<line x1="883.5" y1="303.5" x2="883.5" y2="403.5" stroke="#212121" stroke-width="1" />
<line x1="923.5" y1="303.5" x2="923.5" y2="403.5" stroke="#212121" stroke-width="1" />
<line x1="963.5" y1="303.5" x2="963.5" y2="403.5" stroke="#212121" stroke-width="1" />
<line x1="1003.5" y1="303.5" x2="1003.5" y2="403.5" stroke="#212121" stroke-width="1" />
<line x1="586.5" y1="310.5" x2="1020.5" y2="310.5" stroke="#212121" stroke-width="1" />
<line x1="586.5" y1="319.5" x2="1020.5" y2="319.5" stroke="#212121" stroke-width="1" />
<line x1="586.5" y1="328.5" x2="1020.5" y2="328.5" stroke="#212121" stroke-width="1" />
<line x1="586.5" y1="338.5" x2="1020.5" y2="338.5" stroke="#212121" stroke-width="1" />
<line x1="586.5" y1="347.5" x2="1020.5" y2="347.5" stroke="#212121" stroke-width="1" />
<line x1="586.5" y1="356.5" x2="1020.5" y2="356.5" stroke="#212121" stroke-width="1" />
<line x1="586.5" y1="365.5" x2="1020.5" y2="365.5" stroke="#212121" stroke-width="1" />
<line x1="586.5" y1="375.5" x2="1020.5" y2="375.5" stroke="#212121" stroke-width="1" />
<line x1="586.5" y1="384.5" x2="1020.5" y2="384.5" stroke="#212121" stroke-width="1" />
<line x1="586.5" y1="393.5" x2="1020.5" y2="393.5" stroke="#212121" stroke-width="1" />
<line x1="586.5" y1="402.5" x2="1020.5" y2="402.5" stroke="#212121" stroke-width="1" />
<rect x="586.5" y="303.5" width="434" height="100" fill="none" stroke="#282828" stroke-width="1"/>
<line x1="602.5" y1="403.5" x2="602.5" y2="408" stroke="#272727" stroke-width="1" />
<text x="602.6" y="417.7" font-size="9.0" fill="#bcbcbc" text-anchor="middle" font-family='"DejaVu Sans Mono", "Liberation Mono", monospace' >-0</text>
<line x1="642.5" y1="403.5" x2="642.5" y2="408" stroke="#272727" stroke-width="1" />
<text x="642.69" y="417.7" font-size="9.0" fill="#bcbcbc" text-anchor="middle" font-family='"DejaVu Sans Mono", "Liberation Mono", monospace' >4</text>
<line x1="682.5" y1="403.5" x2="682.5" y2="408" stroke="#272727" stroke-width="1" />
<text x="682.78" y="417.7" font-size="9.0" fill="#bcbcbc" text-anchor="middle" font-family='"DejaVu Sans Mono", "Liberation Mono", monospace' >9</text>
<line x1="722.5" y1="403.5" x2="722.5" y2="408" stroke="#272727" stroke-width="1" />
<text x="722.87" y="417.7" font-size="9.0" fill="#bcbcbc" text-anchor="middle" font-family='"DejaVu Sans Mono", "Liberation Mono", monospace' >13</text>
<line x1="762.5" y1="403.5" x2="762.5" y2="408" stroke="#272727" stroke-width="1" />
<text x="762.96" y="417.7" font-size="9.0" fill="#bcbcbc" text-anchor="middle" font-family='"DejaVu Sans Mono", "Liberation Mono", monospace' >18</text>
<line x1="803.5" y1="403.5" x2="803.5" y2="408" stroke="#272727" stroke-width="1" />
<text x="803.05" y="417.7" font-size="9.0" fill="#bcbcbc" text-anchor="middle" font-family='"DejaVu Sans Mono", "Liberation Mono", monospace' >22</text>
<line x1="843.5" y1="403.5" x2="843.5" y2="408" stroke="#272727" stroke-width="1" />
<text x="843.14" y="417.7" font-size="9.0" fill="#bcbcbc" text-anchor="middle" font-family='"DejaVu Sans Mono", "Liberation Mono", monospace' >26</text>
<line x1="883.5" y1="403.5" x2="883.5" y2="408" stroke="#272727" stroke-width="1" />
<text x="883.23" y="417.7" font-size="9.0" fill="#bcbcbc" text-anchor="middle" font-family='"DejaVu Sans Mono", "Liberation Mono", monospace' >31</text>
<line x1="923.5" y1="403.5" x2="923.5" y2="408" stroke="#272727" stroke-width="1" />
<text x="923.32" y="417.7" font-size="9.0" fill="#bcbcbc" text-anchor="middle" font-family='"DejaVu Sans Mono", "Liberation Mono", monospace' >35</text>
<line x1="963.5" y1="403.5" x2="963.5" y2="408" stroke="#272727" stroke-width="1" />
<text x="963.41" y="417.7" font-size="9.0" fill="#bcbcbc" text-anchor="middle" font-family='"DejaVu Sans Mono", "Liberation Mono", monospace' >39</text>
<line x1="1003.5" y1="403.5" x2="1003.5" y2="408" stroke="#272727" stroke-width="1" />
<text x="1003.5" y="417.7" font-size="9.0" fill="#bcbcbc" text-anchor="middle" font-family='"DejaVu Sans Mono", "Liberation Mono", monospace' >44</text>
<line x1="582.5" y1="319.5" x2="586.5" y2="319.5" stroke="#272727" stroke-width="1" />
<text x="579.8" y="319.5" font-size="9.0" fill="#bcbcbc" text-anchor="middle" font-family='"DejaVu Sans Mono", "Liberation Mono", monospace' transform="rotate(-90 579.8 319.5)" >0.26</text>
<line x1="582.5" y1="356.5" x2="586.5" y2="356.5" stroke="#272727" stroke-width="1" />
<text x="579.8" y="356.5" font-size="9.0" fill="#bcbcbc" text-anchor="middle" font-family='"DejaVu Sans Mono", "Liberation Mono", monospace' transform="rotate(-90 579.8 356.5)" >0.00</text>
<line x1="582.5" y1="393.5" x2="586.5" y2="393.5" stroke="#272727" stroke-width="1" />
<text x="579.8" y="393.5" font-size="9.0" fill="#bcbcbc" text-anchor="middle" font-family='"DejaVu Sans Mono", "Liberation Mono", monospace' transform="rotate(-90 579.8 393.5)" >-0.26</text>
<text x="567.8" y="352.4" font-size="11.67" fill="#e6e6e6" text-anchor="middle" font-family='"DejaVu Sans Mono", "Liberation Mono", monospace' transform="rotate(-90 567.8 352.4)" >Horz Res [km]</text>
<text x="803.5" y="430.6" font-size="11.67" fill="#e6e6e6" text-anchor="middle" font-family='"DejaVu Sans Mono", "Liberation Mono", monospace' >Length Along Trail [km]</text>
<line x1="586.5" y1="356.5" x2="1020.5" y2="356.5" stroke="#f0f0f0" stroke-width="1.0" />
<line x1="753.5" y1="356.5" x2="753.5" y2="333.5" stroke="#0b7f86" stroke-width="1.1" />
<line x1="765.5" y1="356.5" x2="765.5" y2="308.5" stroke="#0b7f86" stroke-width="1.1" />
<line x1="762.5" y1="356.5" x2="762.5" y2="391.25" stroke="#0b7f86" stroke-width="1.1" />
<line x1="776.5" y1="356.5" x2="776.5" y2="314.5" stroke="#0b7f86" stroke-width="1.1" />
<line x1="776.5" y1="356.5" x2="776.5" y2="379.75" stroke="#0b7f86" stroke-width="1.1" />
<line x1="775.5" y1="356.5" x2="775.5" y2="385.25" stroke="#0b7f86" stroke-width="1.1" />
<line x1="781.5" y1="356.5" x2="781.5" y2="381.25" stroke="#0b7f86" stroke-width="1.1" />
<line x1="790.5" y1="356.5" x2="790.5" y2="372.25" stroke="#0b7f86" stroke-width="1.1" />
<line x1="801.5" y1="356.5" x2="801.5" y2="353.5" stroke="#0b7f86" stroke-width="1.1" />
<line x1="802.5" y1="356.5" x2="802.5" y2="385.25" stroke="#0b7f86" stroke-width="1.1" />
<line x1="804.5" y1="356.5" x2="804.5" y2="346.5" stroke="#0b7f86" stroke-width="1.1" />
<line x1="815.5" y1="356.5" x2="815.5" y2="345.5" stroke="#0b7f86" stroke-width="1.1" />
<line x1="816.5" y1="356.5" x2="816.5" y2="355.5" stroke="#0b7f86" stroke-width="1.1" />
<line x1="817.5" y1="356.5" x2="817.5" y2="360.25" stroke="#0b7f86" stroke-width="1.1" />
<line x1="832.5" y1="356.5" x2="832.5" y2="342.5" stroke="#0b7f86" stroke-width="1.1" />
<rect x="751" y="331" width="5" height="5" fill="#00dddd"/>
<rect x="763" y="306" width="5" height="5" fill="#00dddd"/>
<rect x="760" y="388.75" width="5" height="5" fill="#00dddd"/>
<rect x="774" y="312" width="5" height="5" fill="#00dddd"/>
<rect x="774" y="377.25" width="5" height="5" fill="#00dddd"/>
<rect x="773" y="382.75" width="5" height="5" fill="#00dddd"/>
<rect x="779" y="378.75" width="5" height="5" fill="#00dddd"/>
<rect x="788" y="369.75" width="5" height="5" fill="#00dddd"/>
<rect x="799" y="351" width="5" height="5" fill="#00dddd"/>
<rect x="800" y="382.75" width="5" height="5" fill="#00dddd"/>
<rect x="802" y="344" width="5" height="5" fill="#00dddd"/>
<rect x="813" y="343" width="5" height="5" fill="#00dddd"/>
<rect x="814" y="353" width="5" height="5" fill="#00dddd"/>
<rect x="815" y="357.75" width="5" height="5" fill="#00dddd"/>
<rect x="830" y="340" width="5" height="5" fill="#00dddd"/>
<line x1="602.5" y1="356.5" x2="602.5" y2="345.5" stroke="#8c8c1c" stroke-width="1.1" />
<line x1="604.5" y1="356.5" x2="604.5" y2="359.5" stroke="#8c8c1c" stroke-width="1.1" />
<line x1="610.5" y1="356.5" x2="610.5" y2="384.25" stroke="#8c8c1c" stroke-width="1.1" />
<line x1="617.5" y1="356.5" x2="617.5" y2="371.25" stroke="#8c8c1c" stroke-width="1.1" />
<line x1="625.5" y1="356.5" x2="625.5" y2="348.5" stroke="#8c8c1c" stroke-width="1.1" />
<line x1="632.5" y1="356.5" x2="632.5" y2="346.75" stroke="#8c8c1c" stroke-width="1.1" />
<line x1="636.5" y1="356.5" x2="636.5" y2="385.25" stroke="#8c8c1c" stroke-width="1.1" />
<line x1="641.5" y1="356.5" x2="641.5" y2="320.5" stroke="#8c8c1c" stroke-width="1.1" />
<line x1="645.5" y1="356.5" x2="645.5" y2="385.25" stroke="#8c8c1c" stroke-width="1.1" />
<line x1="653.5" y1="356.5" x2="653.5" y2="355.5" stroke="#8c8c1c" stroke-width="1.1" />
<line x1="660.5" y1="356.5" x2="660.5" y2="348.5" stroke="#8c8c1c" stroke-width="1.1" />
<line x1="662.5" y1="356.5" x2="662.5" y2="353.5" stroke="#8c8c1c" stroke-width="1.1" />
<line x1="668.5" y1="356.5" x2="668.5" y2="341.5" stroke="#8c8c1c" stroke-width="1.1" />
<line x1="675.5" y1="356.5" x2="675.5" y2="333.5" stroke="#8c8c1c" stroke-width="1.1" />
<line x1="679.5" y1="356.5" x2="679.5" y2="325.5" stroke="#8c8c1c" stroke-width="1.1" />
<line x1="685.5" y1="356.5" x2="685.5" y2="375.25" stroke="#8c8c1c" stroke-width="1.1" />
<line x1="691.5" y1="356.5" x2="691.5" y2="369.25" stroke="#8c8c1c" stroke-width="1.1" />
<line x1="699.5" y1="356.5" x2="699.5" y2="360.25" stroke="#8c8c1c" stroke-width="1.1" />
<line x1="706.5" y1="356.5" x2="706.5" y2="354.5" stroke="#8c8c1c" stroke-width="1.1" />
<line x1="710.5" y1="356.5" x2="710.5" y2="388.25" stroke="#8c8c1c" stroke-width="1.1" />
<line x1="718.5" y1="356.5" x2="718.5" y2="317.5" stroke="#8c8c1c" stroke-width="1.1" />
<line x1="725.5" y1="356.5" x2="725.5" y2="311.5" stroke="#8c8c1c" stroke-width="1.1" />
<line x1="729.5" y1="356.5" x2="729.5" y2="377.25" stroke="#8c8c1c" stroke-width="1.1" />
<line x1="735.5" y1="356.5" x2="735.5" y2="349.5" stroke="#8c8c1c" stroke-width="1.1" />
<line x1="743.5" y1="356.5" x2="743.5" y2="381.25" stroke="#8c8c1c" stroke-width="1.1" />
<line x1="745.5" y1="356.5" x2="745.5" y2="378.25" stroke="#8c8c1c" stroke-width="1.1" />
<line x1="752.5" y1="356.5" x2="752.5" y2="377.25" stroke="#8c8c1c" stroke-width="1.1" />
<line x1="754.5" y1="356.5" x2="754.5" y2="328.5" stroke="#8c8c1c" stroke-width="1.1" />
<line x1="759.5" y1="356.5" x2="759.5" y2="319.5" stroke="#8c8c1c" stroke-width="1.1" />
<line x1="768.5" y1="356.5" x2="768.5" y2="360.25" stroke="#8c8c1c" stroke-width="1.1" />
<line x1="771.5" y1="356.5" x2="771.5" y2="329.5" stroke="#8c8c1c" stroke-width="1.1" />
<line x1="777.5" y1="356.5" x2="777.5" y2="381.25" stroke="#8c8c1c" stroke-width="1.1" />
<line x1="781.5" y1="356.5" x2="781.5" y2="350.5" stroke="#8c8c1c" stroke-width="1.1" />
<line x1="789.5" y1="356.5" x2="789.5" y2="371.25" stroke="#8c8c1c" stroke-width="1.1" />
<line x1="791.5" y1="356.5" x2="791.5" y2="377.25" stroke="#8c8c1c" stroke-width="1.1" />
<line x1="795.5" y1="356.5" x2="795.5" y2="333.5" stroke="#8c8c1c" stroke-width="1.1" />
<line x1="811.5" y1="356.5" x2="811.5" y2="383.25" stroke="#8c8c1c" stroke-width="1.1" />
<line x1="815.5" y1="356.5" x2="815.5" y2="361.5" stroke="#8c8c1c" stroke-width="1.1" />
<line x1="816.5" y1="356.5" x2="816.5" y2="307.5" stroke="#8c8c1c" stroke-width="1.1" />
<line x1="821.5" y1="356.5" x2="821.5" y2="380.25" stroke="#8c8c1c" stroke-width="1.1" />
<line x1="830.5" y1="356.5" x2="830.5" y2="328.5" stroke="#8c8c1c" stroke-width="1.1" />
<line x1="834.5" y1="356.5" x2="834.5" y2="400.5" stroke="#8c8c1c" stroke-width="1.1" />
<line x1="841.5" y1="356.5" x2="841.5" y2="351.5" stroke="#8c8c1c" stroke-width="1.1" />
<line x1="847.5" y1="356.5" x2="847.5" y2="350.5" stroke="#8c8c1c" stroke-width="1.1" />
<line x1="850.5" y1="356.5" x2="850.5" y2="386.25" stroke="#8c8c1c" stroke-width="1.1" />
<line x1="856.5" y1="356.5" x2="856.5" y2="338.5" stroke="#8c8c1c" stroke-width="1.1" />
<line x1="862.5" y1="356.5" x2="862.5" y2="338.5" stroke="#8c8c1c" stroke-width="1.1" />
<line x1="867.5" y1="356.5" x2="867.5" y2="361.5" stroke="#8c8c1c" stroke-width="1.1" />
<line x1="871.5" y1="356.5" x2="871.5" y2="368.25" stroke="#8c8c1c" stroke-width="1.1" />
<line x1="874.5" y1="356.5" x2="874.5" y2="389.25" stroke="#8c8c1c" stroke-width="1.1" />
<line x1="881.5" y1="356.5" x2="881.5" y2="352.5" stroke="#8c8c1c" stroke-width="1.1" />
<line x1="887.5" y1="356.5" x2="887.5" y2="380.25" stroke="#8c8c1c" stroke-width="1.1" />
<line x1="889.5" y1="356.5" x2="889.5" y2="331.5" stroke="#8c8c1c" stroke-width="1.1" />
<line x1="897.5" y1="356.5" x2="897.5" y2="372.25" stroke="#8c8c1c" stroke-width="1.1" />
<line x1="905.5" y1="356.5" x2="905.5" y2="362.25" stroke="#8c8c1c" stroke-width="1.1" />
<line x1="908.5" y1="356.5" x2="908.5" y2="359.5" stroke="#8c8c1c" stroke-width="1.1" />
<line x1="914.5" y1="356.5" x2="914.5" y2="319.5" stroke="#8c8c1c" stroke-width="1.1" />
<line x1="922.5" y1="356.5" x2="922.5" y2="338.5" stroke="#8c8c1c" stroke-width="1.1" />
<line x1="922.5" y1="356.5" x2="922.5" y2="378.25" stroke="#8c8c1c" stroke-width="1.1" />
<line x1="932.5" y1="356.5" x2="932.5" y2="385.25" stroke="#8c8c1c" stroke-width="1.1" />
<line x1="937.5" y1="356.5" x2="937.5" y2="365.25" stroke="#8c8c1c" stroke-width="1.1" />
<line x1="939.5" y1="356.5" x2="939.5" y2="361.5" stroke="#8c8c1c" stroke-width="1.1" />
<line x1="946.5" y1="356.5" x2="946.5" y2="357.25" stroke="#8c8c1c" stroke-width="1.1" />
<line x1="947.5" y1="356.5" x2="947.5" y2="357.25" stroke="#8c8c1c" stroke-width="1.1" />
<line x1="956.5" y1="356.5" x2="956.5" y2="335.5" stroke="#8c8c1c" stroke-width="1.1" />
<line x1="956.5" y1="356.5" x2="956.5" y2="372.25" stroke="#8c8c1c" stroke-width="1.1" />
<line x1="962.5" y1="356.5" x2="962.5" y2="325.5" stroke="#8c8c1c" stroke-width="1.1" />
<line x1="970.5" y1="356.5" x2="970.5" y2="356.25" stroke="#8c8c1c" stroke-width="1.1" />
<line x1="971.5" y1="356.5" x2="971.5" y2="347.5" stroke="#8c8c1c" stroke-width="1.1" />
<line x1="979.5" y1="356.5" x2="979.5" y2="338.5" stroke="#8c8c1c" stroke-width="1.1" />
<line x1="980.5" y1="356.5" x2="980.5" y2="352.5" stroke="#8c8c1c" stroke-width="1.1" />
<line x1="982.5" y1="356.5" x2="982.5" y2="376.25" stroke="#8c8c1c" stroke-width="1.1" />
<line x1="991.5" y1="356.5" x2="991.5" y2="378.25" stroke="#8c8c1c" stroke-width="1.1" />
<line x1="995.5" y1="356.5" x2="995.5" y2="330.5" stroke="#8c8c1c" stroke-width="1.1" />
<line x1="1003.5" y1="356.5" x2="1003.5" y2="355.5" stroke="#8c8c1c" stroke-width="1.1" />
<rect x="600" y="343" width="5" height="5" fill="#ffff33"/>
<rect x="602" y="357" width="5" height="5" fill="#ffff33"/>
<rect x="608" y="381.75" width="5" height="5" fill="#ffff33"/>
<rect x="615" y="368.75" width="5" height="5" fill="#ffff33"/>
<rect x="623" y="346" width="5" height="5" fill="#ffff33"/>
<rect x="630" y="344.25" width="5" height="5" fill="#ffff33"/>
<rect x="634" y="382.75" width="5" height="5" fill="#ffff33"/>
<rect x="639" y="318" width="5" height="5" fill="#ffff33"/>
<rect x="643" y="382.75" width="5" height="5" fill="#ffff33"/>
<rect x="651" y="353" width="5" height="5" fill="#ffff33"/>
<rect x="658" y="346" width="5" height="5" fill="#ffff33"/>
<rect x="660" y="351" width="5" height="5" fill="#ffff33"/>
<rect x="666" y="339" width="5" height="5" fill="#ffff33"/>
<rect x="673" y="331" width="5" height="5" fill="#ffff33"/>
<rect x="677" y="323" width="5" height="5" fill="#ffff33"/>
<rect x="683" y="372.75" width="5" height="5" fill="#ffff33"/>
<rect x="689" y="366.75" width="5" height="5" fill="#ffff33"/>
<rect x="697" y="357.75" width="5" height="5" fill="#ffff33"/>
<rect x="704" y="352" width="5" height="5" fill="#ffff33"/>
<rect x="708" y="385.75" width="5" height="5" fill="#ffff33"/>
<rect x="716" y="315" width="5" height="5" fill="#ffff33"/>
<rect x="723" y="309" width="5" height="5" fill="#ffff33"/>
<rect x="727" y="374.75" width="5" height="5" fill="#ffff33"/>
<rect x="733" y="347" width="5" height="5" fill="#ffff33"/>
<rect x="741" y="378.75" width="5" height="5" fill="#ffff33"/>
<rect x="743" y="375.75" width="5" height="5" fill="#ffff33"/>
<rect x="750" y="374.75" width="5" height="5" fill="#ffff33"/>
<rect x="752" y="326" width="5" height="5" fill="#ffff33"/>
<rect x="757" y="317" width="5" height="5" fill="#ffff33"/>
<rect x="766" y="357.75" width="5" height="5" fill="#ffff33"/>
<rect x="769" y="327" width="5" height="5" fill="#ffff33"/>
<rect x="775" y="378.75" width="5" height="5" fill="#ffff33"/>
<rect x="779" y="348" width="5" height="5" fill="#ffff33"/>
<rect x="787" y="368.75" width="5" height="5" fill="#ffff33"/>
<rect x="789" y="374.75" width="5" height="5" fill="#ffff33"/>
<rect x="793" y="331" width="5" height="5" fill="#ffff33"/>
<rect x="809" y="380.75" width="5" height="5" fill="#ffff33"/>
<rect x="813" y="359" width="5" height="5" fill="#ffff33"/>
<rect x="814" y="305" width="5" height="5" fill="#ffff33"/>
<rect x="819" y="377.75" width="5" height="5" fill="#ffff33"/>
<rect x="828" y="326" width="5" height="5" fill="#ffff33"/>
<rect x="832" y="398" width="5" height="5" fill="#ffff33"/>
<rect x="839" y="349" width="5" height="5" fill="#ffff33"/>
<rect x="845" y="348" width="5" height="5" fill="#ffff33"/>
<rect x="848" y="383.75" width="5" height="5" fill="#ffff33"/>
<rect x="854" y="336" width="5" height="5" fill="#ffff33"/>
<rect x="860" y="336" width="5" height="5" fill="#ffff33"/>
<rect x="865" y="359" width="5" height="5" fill="#ffff33"/>
<rect x="869" y="365.75" width="5" height="5" fill="#ffff33"/>
<rect x="872" y="386.75" width="5" height="5" fill="#ffff33"/>
<rect x="879" y="350" width="5" height="5" fill="#ffff33"/>
<rect x="885" y="377.75" width="5" height="5" fill="#ffff33"/>
<rect x="887" y="329" width="5" height="5" fill="#ffff33"/>
<rect x="895" y="369.75" width="5" height="5" fill="#ffff33"/>
<rect x="903" y="359.75" width="5" height="5" fill="#ffff33"/>
<rect x="906" y="357" width="5" height="5" fill="#ffff33"/>
<rect x="912" y="317" width="5" height="5" fill="#ffff33"/>
<rect x="920" y="336" width="5" height="5" fill="#ffff33"/>
<rect x="920" y="375.75" width="5" height="5" fill="#ffff33"/>
<rect x="930" y="382.75" width="5" height="5" fill="#ffff33"/>
<rect x="935" y="362.75" width="5" height="5" fill="#ffff33"/>
<rect x="937" y="359" width="5" height="5" fill="#ffff33"/>
<rect x="944" y="354.75" width="5" height="5" fill="#ffff33"/>
<rect x="945" y="354.75" width="5" height="5" fill="#ffff33"/>
<rect x="954" y="333" width="5" height="5" fill="#ffff33"/>
<rect x="954" y="369.75" width="5" height="5" fill="#ffff33"/>
<rect x="960" y="323" width="5" height="5" fill="#ffff33"/>
<rect x="968" y="353.75" width="5" height="5" fill="#ffff33"/>
<rect x="969" y="345" width="5" height="5" fill="#ffff33"/>
<rect x="977" y="336" width="5" height="5" fill="#ffff33"/>
<rect x="978" y="350" width="5" height="5" fill="#ffff33"/>
<rect x="980" y="373.75" width="5" height="5" fill="#ffff33"/>
<rect x="989" y="375.75" width="5" height="5" fill="#ffff33"/>
<rect x="993" y="328" width="5" height="5" fill="#ffff33"/>
<rect x="1001" y="353" width="5" height="5" fill="#ffff33"/>
<line x1="602.5" y1="441.5" x2="602.5" y2="541.5" stroke="#212121" stroke-width="1" />
<line x1="642.5" y1="441.5" x2="642.5" y2="541.5" stroke="#212121" stroke-width="1" />
<line x1="682.5" y1="441.5" x2="682.5" y2="541.5" stroke="#212121" stroke-width="1" />
<line x1="722.5" y1="441.5" x2="722.5" y2="541.5" stroke="#212121" stroke-width="1" />
<line x1="762.5" y1="441.5" x2="762.5" y2="541.5" stroke="#212121" stroke-width="1" />
<line x1="803.5" y1="441.5" x2="803.5" y2="541.5" stroke="#212121" stroke-width="1" />
<line x1="843.5" y1="441.5" x2="843.5" y2="541.5" stroke="#212121" stroke-width="1" />
<line x1="883.5" y1="441.5" x2="883.5" y2="541.5" stroke="#212121" stroke-width="1" />
<line x1="923.5" y1="441.5" x2="923.5" y2="541.5" stroke="#212121" stroke-width="1" />
<line x1="963.5" y1="441.5" x2="963.5" y2="541.5" stroke="#212121" stroke-width="1" />
<line x1="1003.5" y1="441.5" x2="1003.5" y2="541.5" stroke="#212121" stroke-width="1" />
<line x1="586.5" y1="447.5" x2="1020.5" y2="447.5" stroke="#212121" stroke-width="1" />
<line x1="586.5" y1="456.5" x2="1020.5" y2="456.5" stroke="#212121" stroke-width="1" />
<line x1="586.5" y1="466.5" x2="1020.5" y2="466.5" stroke="#212121" stroke-width="1" />
<line x1="586.5" y1="475.5" x2="1020.5" y2="475.5" stroke="#212121" stroke-width="1" />
<line x1="586.5" y1="484.5" x2="1020.5" y2="484.5" stroke="#212121" stroke-width="1" />
<line x1="586.5" y1="493.5" x2="1020.5" y2="493.5" stroke="#212121" stroke-width="1" />
<line x1="586.5" y1="503.5" x2="1020.5" y2="503.5" stroke="#212121" stroke-width="1" />
<line x1="586.5" y1="512.5" x2="1020.5" y2="512.5" stroke="#212121" stroke-width="1" />
<line x1="586.5" y1="521.5" x2="1020.5" y2="521.5" stroke="#212121" stroke-width="1" />
<line x1="586.5" y1="530.5" x2="1020.5" y2="530.5" stroke="#212121" stroke-width="1" />
<line x1="586.5" y1="540.5" x2="1020.5" y2="540.5" stroke="#212121" stroke-width="1" />
<rect x="586.5" y="441.5" width="434" height="100" fill="none" stroke="#282828" stroke-width="1"/>
<line x1="602.5" y1="541.5" x2="602.5" y2="546" stroke="#272727" stroke-width="1" />
<text x="602.6" y="555.7" font-size="9.0" fill="#bcbcbc" text-anchor="middle" font-family='"DejaVu Sans Mono", "Liberation Mono", monospace' >-0</text>
<line x1="642.5" y1="541.5" x2="642.5" y2="546" stroke="#272727" stroke-width="1" />
<text x="642.69" y="555.7" font-size="9.0" fill="#bcbcbc" text-anchor="middle" font-family='"DejaVu Sans Mono", "Liberation Mono", monospace' >4</text>
<line x1="682.5" y1="541.5" x2="682.5" y2="546" stroke="#272727" stroke-width="1" />
<text x="682.78" y="555.7" font-size="9.0" fill="#bcbcbc" text-anchor="middle" font-family='"DejaVu Sans Mono", "Liberation Mono", monospace' >9</text>
<line x1="722.5" y1="541.5" x2="722.5" y2="546" stroke="#272727" stroke-width="1" />
<text x="722.87" y="555.7" font-size="9.0" fill="#bcbcbc" text-anchor="middle" font-family='"DejaVu Sans Mono", "Liberation Mono", monospace' >13</text>
<line x1="762.5" y1="541.5" x2="762.5" y2="546" stroke="#272727" stroke-width="1" />
<text x="762.96" y="555.7" font-size="9.0" fill="#bcbcbc" text-anchor="middle" font-family='"DejaVu Sans Mono", "Liberation Mono", monospace' >18</text>
<line x1="803.5" y1="541.5" x2="803.5" y2="546" stroke="#272727" stroke-width="1" />
<text x="803.05" y="555.7" font-size="9.0" fill="#bcbcbc" text-anchor="middle" font-family='"DejaVu Sans Mono", "Liberation Mono", monospace' >22</text>
<line x1="843.5" y1="541.5" x2="843.5" y2="546" stroke="#272727" stroke-width="1" />
<text x="843.14" y="555.7" font-size="9.0" fill="#bcbcbc" text-anchor="middle" font-family='"DejaVu Sans Mono", "Liberation Mono", monospace' >26</text>
<line x1="883.5" y1="541.5" x2="883.5" y2="546" stroke="#272727" stroke-width="1" />
<text x="883.23" y="555.7" font-size="9.0" fill="#bcbcbc" text-anchor="middle" font-family='"DejaVu Sans Mono", "Liberation Mono", monospace' >31</text>
<line x1="923.5" y1="541.5" x2="923.5" y2="546" stroke="#272727" stroke-width="1" />
<text x="923.32" y="555.7" font-size="9.0" fill="#bcbcbc" text-anchor="middle" font-family='"DejaVu Sans Mono", "Liberation Mono", monospace' >35</text>
<line x1="963.5" y1="541.5" x2="963.5" y2="546" stroke="#272727" stroke-width="1" />
<text x="963.41" y="555.7" font-size="9.0" fill="#bcbcbc" text-anchor="middle" font-family='"DejaVu Sans Mono", "Liberation Mono", monospace' >39</text>
<line x1="1003.5" y1="541.5" x2="1003.5" y2="546" stroke="#272727" stroke-width="1" />
<text x="1003.5" y="555.7" font-size="9.0" fill="#bcbcbc" text-anchor="middle" font-family='"DejaVu Sans Mono", "Liberation Mono", monospace' >44</text>
<line x1="582.5" y1="484.5" x2="586.5" y2="484.5" stroke="#272727" stroke-width="1" />
<text x="579.8" y="484.5" font-size="9.0" fill="#bcbcbc" text-anchor="middle" font-family='"DejaVu Sans Mono", "Liberation Mono", monospace' transform="rotate(-90 579.8 484.5)" >0.00</text>
<line x1="582.5" y1="521.5" x2="586.5" y2="521.5" stroke="#272727" stroke-width="1" />
<text x="579.8" y="521.5" font-size="9.0" fill="#bcbcbc" text-anchor="middle" font-family='"DejaVu Sans Mono", "Liberation Mono", monospace' transform="rotate(-90 579.8 521.5)" >-0.27</text>
<text x="567.8" y="491.5" font-size="11.67" fill="#e6e6e6" text-anchor="middle" font-family='"DejaVu Sans Mono", "Liberation Mono", monospace' transform="rotate(-90 567.8 491.5)" >Vert Res [km]</text>
<text x="803.5" y="568.6" font-size="11.67" fill="#e6e6e6" text-anchor="middle" font-family='"DejaVu Sans Mono", "Liberation Mono", monospace' >Length Along Trail [km]</text>
<line x1="586.5" y1="484.5" x2="1020.5" y2="484.5" stroke="#f0f0f0" stroke-width="1.0" />
<line x1="753.5" y1="484.5" x2="753.5" y2="510.25" stroke="#0b7f86" stroke-width="1.1" />
<line x1="762.5" y1="484.5" x2="762.5" y2="445.5" stroke="#0b7f86" stroke-width="1.1" />
<line x1="765.5" y1="484.5" x2="765.5" y2="538.25" stroke="#0b7f86" stroke-width="1.1" />
<line x1="775.5" y1="484.5" x2="775.5" y2="453.5" stroke="#0b7f86" stroke-width="1.1" />
<line x1="776.5" y1="484.5" x2="776.5" y2="459.5" stroke="#0b7f86" stroke-width="1.1" />
<line x1="781.5" y1="484.5" x2="781.5" y2="456.5" stroke="#0b7f86" stroke-width="1.1" />
<line x1="776.5" y1="484.5" x2="776.5" y2="532.25" stroke="#0b7f86" stroke-width="1.1" />
<line x1="790.5" y1="484.5" x2="790.5" y2="467.5" stroke="#0b7f86" stroke-width="1.1" />
<line x1="802.5" y1="484.5" x2="802.5" y2="452.5" stroke="#0b7f86" stroke-width="1.1" />
<line x1="801.5" y1="484.5" x2="801.5" y2="488.5" stroke="#0b7f86" stroke-width="1.1" />
<line x1="804.5" y1="484.5" x2="804.5" y2="496.5" stroke="#0b7f86" stroke-width="1.1" />
<line x1="815.5" y1="484.5" x2="815.5" y2="496.5" stroke="#0b7f86" stroke-width="1.1" />
<line x1="816.5" y1="484.5" x2="816.5" y2="486.5" stroke="#0b7f86" stroke-width="1.1" />
<line x1="817.5" y1="484.5" x2="817.5" y2="480.5" stroke="#0b7f86" stroke-width="1.1" />
<line x1="832.5" y1="484.5" x2="832.5" y2="501.25" stroke="#0b7f86" stroke-width="1.1" />
<rect x="751" y="507.75" width="5" height="5" fill="#00dddd"/>
<rect x="760" y="443" width="5" height="5" fill="#00dddd"/>
<rect x="763" y="535.75" width="5" height="5" fill="#00dddd"/>
<rect x="773" y="451" width="5" height="5" fill="#00dddd"/>
<rect x="774" y="457" width="5" height="5" fill="#00dddd"/>
<rect x="779" y="454" width="5" height="5" fill="#00dddd"/>
<rect x="774" y="529.75" width="5" height="5" fill="#00dddd"/>
<rect x="788" y="465" width="5" height="5" fill="#00dddd"/>
<rect x="800" y="450" width="5" height="5" fill="#00dddd"/>
<rect x="799" y="486" width="5" height="5" fill="#00dddd"/>
<rect x="802" y="494" width="5" height="5" fill="#00dddd"/>
<rect x="813" y="494" width="5" height="5" fill="#00dddd"/>
<rect x="814" y="484" width="5" height="5" fill="#00dddd"/>
<rect x="815" y="478" width="5" height="5" fill="#00dddd"/>
<rect x="830" y="498.75" width="5" height="5" fill="#00dddd"/>
<line x1="602.5" y1="484.5" x2="602.5" y2="491.5" stroke="#8c8c1c" stroke-width="1.1" />
<line x1="604.5" y1="484.5" x2="604.5" y2="483.5" stroke="#8c8c1c" stroke-width="1.1" />
<line x1="610.5" y1="484.5" x2="610.5" y2="468.5" stroke="#8c8c1c" stroke-width="1.1" />
<line x1="617.5" y1="484.5" x2="617.5" y2="476.5" stroke="#8c8c1c" stroke-width="1.1" />
<line x1="625.5" y1="484.5" x2="625.5" y2="489.5" stroke="#8c8c1c" stroke-width="1.1" />
<line x1="632.5" y1="484.5" x2="632.5" y2="490.5" stroke="#8c8c1c" stroke-width="1.1" />
<line x1="636.5" y1="484.5" x2="636.5" y2="468.5" stroke="#8c8c1c" stroke-width="1.1" />
<line x1="641.5" y1="484.5" x2="641.5" y2="505.5" stroke="#8c8c1c" stroke-width="1.1" />
<line x1="645.5" y1="484.5" x2="645.5" y2="468.5" stroke="#8c8c1c" stroke-width="1.1" />
<line x1="653.5" y1="484.5" x2="653.5" y2="485.5" stroke="#8c8c1c" stroke-width="1.1" />
<line x1="660.5" y1="484.5" x2="660.5" y2="489.5" stroke="#8c8c1c" stroke-width="1.1" />
<line x1="662.5" y1="484.5" x2="662.5" y2="486.5" stroke="#8c8c1c" stroke-width="1.1" />
<line x1="668.5" y1="484.5" x2="668.5" y2="493.25" stroke="#8c8c1c" stroke-width="1.1" />
<line x1="675.5" y1="484.5" x2="675.5" y2="498.25" stroke="#8c8c1c" stroke-width="1.1" />
<line x1="679.5" y1="484.5" x2="679.5" y2="502.5" stroke="#8c8c1c" stroke-width="1.1" />
<line x1="685.5" y1="484.5" x2="685.5" y2="474.5" stroke="#8c8c1c" stroke-width="1.1" />
<line x1="691.5" y1="484.5" x2="691.5" y2="477.5" stroke="#8c8c1c" stroke-width="1.1" />
<line x1="699.5" y1="484.5" x2="699.5" y2="482.5" stroke="#8c8c1c" stroke-width="1.1" />
<line x1="706.5" y1="484.5" x2="706.5" y2="486.5" stroke="#8c8c1c" stroke-width="1.1" />
<line x1="710.5" y1="484.5" x2="710.5" y2="467.5" stroke="#8c8c1c" stroke-width="1.1" />
<line x1="718.5" y1="484.5" x2="718.5" y2="507.25" stroke="#8c8c1c" stroke-width="1.1" />
<line x1="725.5" y1="484.5" x2="725.5" y2="511.5" stroke="#8c8c1c" stroke-width="1.1" />
<line x1="729.5" y1="484.5" x2="729.5" y2="472.5" stroke="#8c8c1c" stroke-width="1.1" />
<line x1="735.5" y1="484.5" x2="735.5" y2="489.5" stroke="#8c8c1c" stroke-width="1.1" />
<line x1="743.5" y1="484.5" x2="743.5" y2="470.5" stroke="#8c8c1c" stroke-width="1.1" />
<line x1="745.5" y1="484.5" x2="745.5" y2="472.5" stroke="#8c8c1c" stroke-width="1.1" />
<line x1="752.5" y1="484.5" x2="752.5" y2="473.5" stroke="#8c8c1c" stroke-width="1.1" />
<line x1="754.5" y1="484.5" x2="754.5" y2="500.5" stroke="#8c8c1c" stroke-width="1.1" />
<line x1="759.5" y1="484.5" x2="759.5" y2="506.25" stroke="#8c8c1c" stroke-width="1.1" />
<line x1="768.5" y1="484.5" x2="768.5" y2="482.5" stroke="#8c8c1c" stroke-width="1.1" />
<line x1="771.5" y1="484.5" x2="771.5" y2="500.5" stroke="#8c8c1c" stroke-width="1.1" />
<line x1="777.5" y1="484.5" x2="777.5" y2="470.5" stroke="#8c8c1c" stroke-width="1.1" />
<line x1="781.5" y1="484.5" x2="781.5" y2="488.5" stroke="#8c8c1c" stroke-width="1.1" />
<line x1="789.5" y1="484.5" x2="789.5" y2="476.5" stroke="#8c8c1c" stroke-width="1.1" />
<line x1="791.5" y1="484.5" x2="791.5" y2="473.5" stroke="#8c8c1c" stroke-width="1.1" />
<line x1="795.5" y1="484.5" x2="795.5" y2="497.5" stroke="#8c8c1c" stroke-width="1.1" />
<line x1="811.5" y1="484.5" x2="811.5" y2="469.5" stroke="#8c8c1c" stroke-width="1.1" />
<line x1="815.5" y1="484.5" x2="815.5" y2="482.5" stroke="#8c8c1c" stroke-width="1.1" />
<line x1="816.5" y1="484.5" x2="816.5" y2="513.25" stroke="#8c8c1c" stroke-width="1.1" />
<line x1="821.5" y1="484.5" x2="821.5" y2="471.5" stroke="#8c8c1c" stroke-width="1.1" />
<line x1="830.5" y1="484.5" x2="830.5" y2="500.5" stroke="#8c8c1c" stroke-width="1.1" />
<line x1="834.5" y1="484.5" x2="834.5" y2="460.5" stroke="#8c8c1c" stroke-width="1.1" />
<line x1="841.5" y1="484.5" x2="841.5" y2="488.5" stroke="#8c8c1c" stroke-width="1.1" />
<line x1="847.5" y1="484.5" x2="847.5" y2="488.5" stroke="#8c8c1c" stroke-width="1.1" />
<line x1="850.5" y1="484.5" x2="850.5" y2="467.5" stroke="#8c8c1c" stroke-width="1.1" />
<line x1="856.5" y1="484.5" x2="856.5" y2="495.5" stroke="#8c8c1c" stroke-width="1.1" />
<line x1="862.5" y1="484.5" x2="862.5" y2="495.5" stroke="#8c8c1c" stroke-width="1.1" />
<line x1="867.5" y1="484.5" x2="867.5" y2="481.5" stroke="#8c8c1c" stroke-width="1.1" />
<line x1="871.5" y1="484.5" x2="871.5" y2="478.5" stroke="#8c8c1c" stroke-width="1.1" />
<line x1="874.5" y1="484.5" x2="874.5" y2="466.5" stroke="#8c8c1c" stroke-width="1.1" />
<line x1="881.5" y1="484.5" x2="881.5" y2="487.5" stroke="#8c8c1c" stroke-width="1.1" />
<line x1="887.5" y1="484.5" x2="887.5" y2="471.5" stroke="#8c8c1c" stroke-width="1.1" />
<line x1="889.5" y1="484.5" x2="889.5" y2="499.5" stroke="#8c8c1c" stroke-width="1.1" />
<line x1="897.5" y1="484.5" x2="897.5" y2="475.5" stroke="#8c8c1c" stroke-width="1.1" />
<line x1="905.5" y1="484.5" x2="905.5" y2="481.5" stroke="#8c8c1c" stroke-width="1.1" />
<line x1="908.5" y1="484.5" x2="908.5" y2="483.5" stroke="#8c8c1c" stroke-width="1.1" />
<line x1="914.5" y1="484.5" x2="914.5" y2="506.25" stroke="#8c8c1c" stroke-width="1.1" />
<line x1="922.5" y1="484.5" x2="922.5" y2="472.5" stroke="#8c8c1c" stroke-width="1.1" />
<line x1="922.5" y1="484.5" x2="922.5" y2="495.5" stroke="#8c8c1c" stroke-width="1.1" />
<line x1="932.5" y1="484.5" x2="932.5" y2="468.5" stroke="#8c8c1c" stroke-width="1.1" />
<line x1="937.5" y1="484.5" x2="937.5" y2="479.5" stroke="#8c8c1c" stroke-width="1.1" />
<line x1="939.5" y1="484.5" x2="939.5" y2="482.5" stroke="#8c8c1c" stroke-width="1.1" />
<line x1="946.5" y1="484.5" x2="946.5" y2="484.5" stroke="#8c8c1c" stroke-width="1.1" />
<line x1="947.5" y1="484.5" x2="947.5" y2="484.5" stroke="#8c8c1c" stroke-width="1.1" />
<line x1="956.5" y1="484.5" x2="956.5" y2="475.5" stroke="#8c8c1c" stroke-width="1.1" />
<line x1="956.5" y1="484.5" x2="956.5" y2="496.5" stroke="#8c8c1c" stroke-width="1.1" />
<line x1="962.5" y1="484.5" x2="962.5" y2="502.5" stroke="#8c8c1c" stroke-width="1.1" />
<line x1="970.5" y1="484.5" x2="970.5" y2="484.5" stroke="#8c8c1c" stroke-width="1.1" />
<line x1="971.5" y1="484.5" x2="971.5" y2="490.5" stroke="#8c8c1c" stroke-width="1.1" />
<line x1="979.5" y1="484.5" x2="979.5" y2="495.5" stroke="#8c8c1c" stroke-width="1.1" />
<line x1="980.5" y1="484.5" x2="980.5" y2="487.5" stroke="#8c8c1c" stroke-width="1.1" />
<line x1="982.5" y1="484.5" x2="982.5" y2="473.5" stroke="#8c8c1c" stroke-width="1.1" />
<line x1="991.5" y1="484.5" x2="991.5" y2="472.5" stroke="#8c8c1c" stroke-width="1.1" />
<line x1="995.5" y1="484.5" x2="995.5" y2="500.5" stroke="#8c8c1c" stroke-width="1.1" />
<line x1="1003.5" y1="484.5" x2="1003.5" y2="485.5" stroke="#8c8c1c" stroke-width="1.1" />
<rect x="600" y="489" width="5" height="5" fill="#ffff33"/>
<rect x="602" y="481" width="5" height="5" fill="#ffff33"/>
<rect x="608" y="466" width="5" height="5" fill="#ffff33"/>
<rect x="615" y="474" width="5" height="5" fill="#ffff33"/>
<rect x="623" y="487" width="5" height="5" fill="#ffff33"/>
<rect x="630" y="488" width="5" height="5" fill="#ffff33"/>
<rect x="634" y="466" width="5" height="5" fill="#ffff33"/>
<rect x="639" y="503" width="5" height="5" fill="#ffff33"/>
<rect x="643" y="466" width="5" height="5" fill="#ffff33"/>
<rect x="651" y="483" width="5" height="5" fill="#ffff33"/>
<rect x="658" y="487" width="5" height="5" fill="#ffff33"/>
<rect x="660" y="484" width="5" height="5" fill="#ffff33"/>
<rect x="666" y="490.75" width="5" height="5" fill="#ffff33"/>
<rect x="673" y="495.75" width="5" height="5" fill="#ffff33"/>
<rect x="677" y="500" width="5" height="5" fill="#ffff33"/>
<rect x="683" y="472" width="5" height="5" fill="#ffff33"/>
<rect x="689" y="475" width="5" height="5" fill="#ffff33"/>
<rect x="697" y="480" width="5" height="5" fill="#ffff33"/>
<rect x="704" y="484" width="5" height="5" fill="#ffff33"/>
<rect x="708" y="465" width="5" height="5" fill="#ffff33"/>
<rect x="716" y="504.75" width="5" height="5" fill="#ffff33"/>
<rect x="723" y="509" width="5" height="5" fill="#ffff33"/>
<rect x="727" y="470" width="5" height="5" fill="#ffff33"/>
<rect x="733" y="487" width="5" height="5" fill="#ffff33"/>
<rect x="741" y="468" width="5" height="5" fill="#ffff33"/>
<rect x="743" y="470" width="5" height="5" fill="#ffff33"/>
<rect x="750" y="471" width="5" height="5" fill="#ffff33"/>
<rect x="752" y="498" width="5" height="5" fill="#ffff33"/>
<rect x="757" y="503.75" width="5" height="5" fill="#ffff33"/>
<rect x="766" y="480" width="5" height="5" fill="#ffff33"/>
<rect x="769" y="498" width="5" height="5" fill="#ffff33"/>
<rect x="775" y="468" width="5" height="5" fill="#ffff33"/>
<rect x="779" y="486" width="5" height="5" fill="#ffff33"/>
<rect x="787" y="474" width="5" height="5" fill="#ffff33"/>
<rect x="789" y="471" width="5" height="5" fill="#ffff33"/>
<rect x="793" y="495" width="5" height="5" fill="#ffff33"/>
<rect x="809" y="467" width="5" height="5" fill="#ffff33"/>
<rect x="813" y="480" width="5" height="5" fill="#ffff33"/>
<rect x="814" y="510.75" width="5" height="5" fill="#ffff33"/>
<rect x="819" y="469" width="5" height="5" fill="#ffff33"/>
<rect x="828" y="498" width="5" height="5" fill="#ffff33"/>
<rect x="832" y="458" width="5" height="5" fill="#ffff33"/>
<rect x="839" y="486" width="5" height="5" fill="#ffff33"/>
<rect x="845" y="486" width="5" height="5" fill="#ffff33"/>
<rect x="848" y="465" width="5" height="5" fill="#ffff33"/>
<rect x="854" y="493" width="5" height="5" fill="#ffff33"/>
<rect x="860" y="493" width="5" height="5" fill="#ffff33"/>
<rect x="865" y="479" width="5" height="5" fill="#ffff33"/>
<rect x="869" y="476" width="5" height="5" fill="#ffff33"/>
<rect x="872" y="464" width="5" height="5" fill="#ffff33"/>
<rect x="879" y="485" width="5" height="5" fill="#ffff33"/>
<rect x="885" y="469" width="5" height="5" fill="#ffff33"/>
<rect x="887" y="497" width="5" height="5" fill="#ffff33"/>
<rect x="895" y="473" width="5" height="5" fill="#ffff33"/>
<rect x="903" y="479" width="5" height="5" fill="#ffff33"/>
<rect x="906" y="481" width="5" height="5" fill="#ffff33"/>
<rect x="912" y="503.75" width="5" height="5" fill="#ffff33"/>
<rect x="920" y="470" width="5" height="5" fill="#ffff33"/>
<rect x="920" y="493" width="5" height="5" fill="#ffff33"/>
<rect x="930" y="466" width="5" height="5" fill="#ffff33"/>
<rect x="935" y="477" width="5" height="5" fill="#ffff33"/>
<rect x="937" y="480" width="5" height="5" fill="#ffff33"/>
<rect x="944" y="482" width="5" height="5" fill="#ffff33"/>
<rect x="945" y="482" width="5" height="5" fill="#ffff33"/>
<rect x="954" y="473" width="5" height="5" fill="#ffff33"/>
<rect x="954" y="494" width="5" height="5" fill="#ffff33"/>
<rect x="960" y="500" width="5" height="5" fill="#ffff33"/>
<rect x="968" y="482" width="5" height="5" fill="#ffff33"/>
<rect x="969" y="488" width="5" height="5" fill="#ffff33"/>
<rect x="977" y="493" width="5" height="5" fill="#ffff33"/>
<rect x="978" y="485" width="5" height="5" fill="#ffff33"/>
<rect x="980" y="471" width="5" height="5" fill="#ffff33"/>
<rect x="989" y="470" width="5" height="5" fill="#ffff33"/>
<rect x="993" y="498" width="5" height="5" fill="#ffff33"/>
<rect x="1001" y="483" width="5" height="5" fill="#ffff33"/>
</svg>
</body></html>
